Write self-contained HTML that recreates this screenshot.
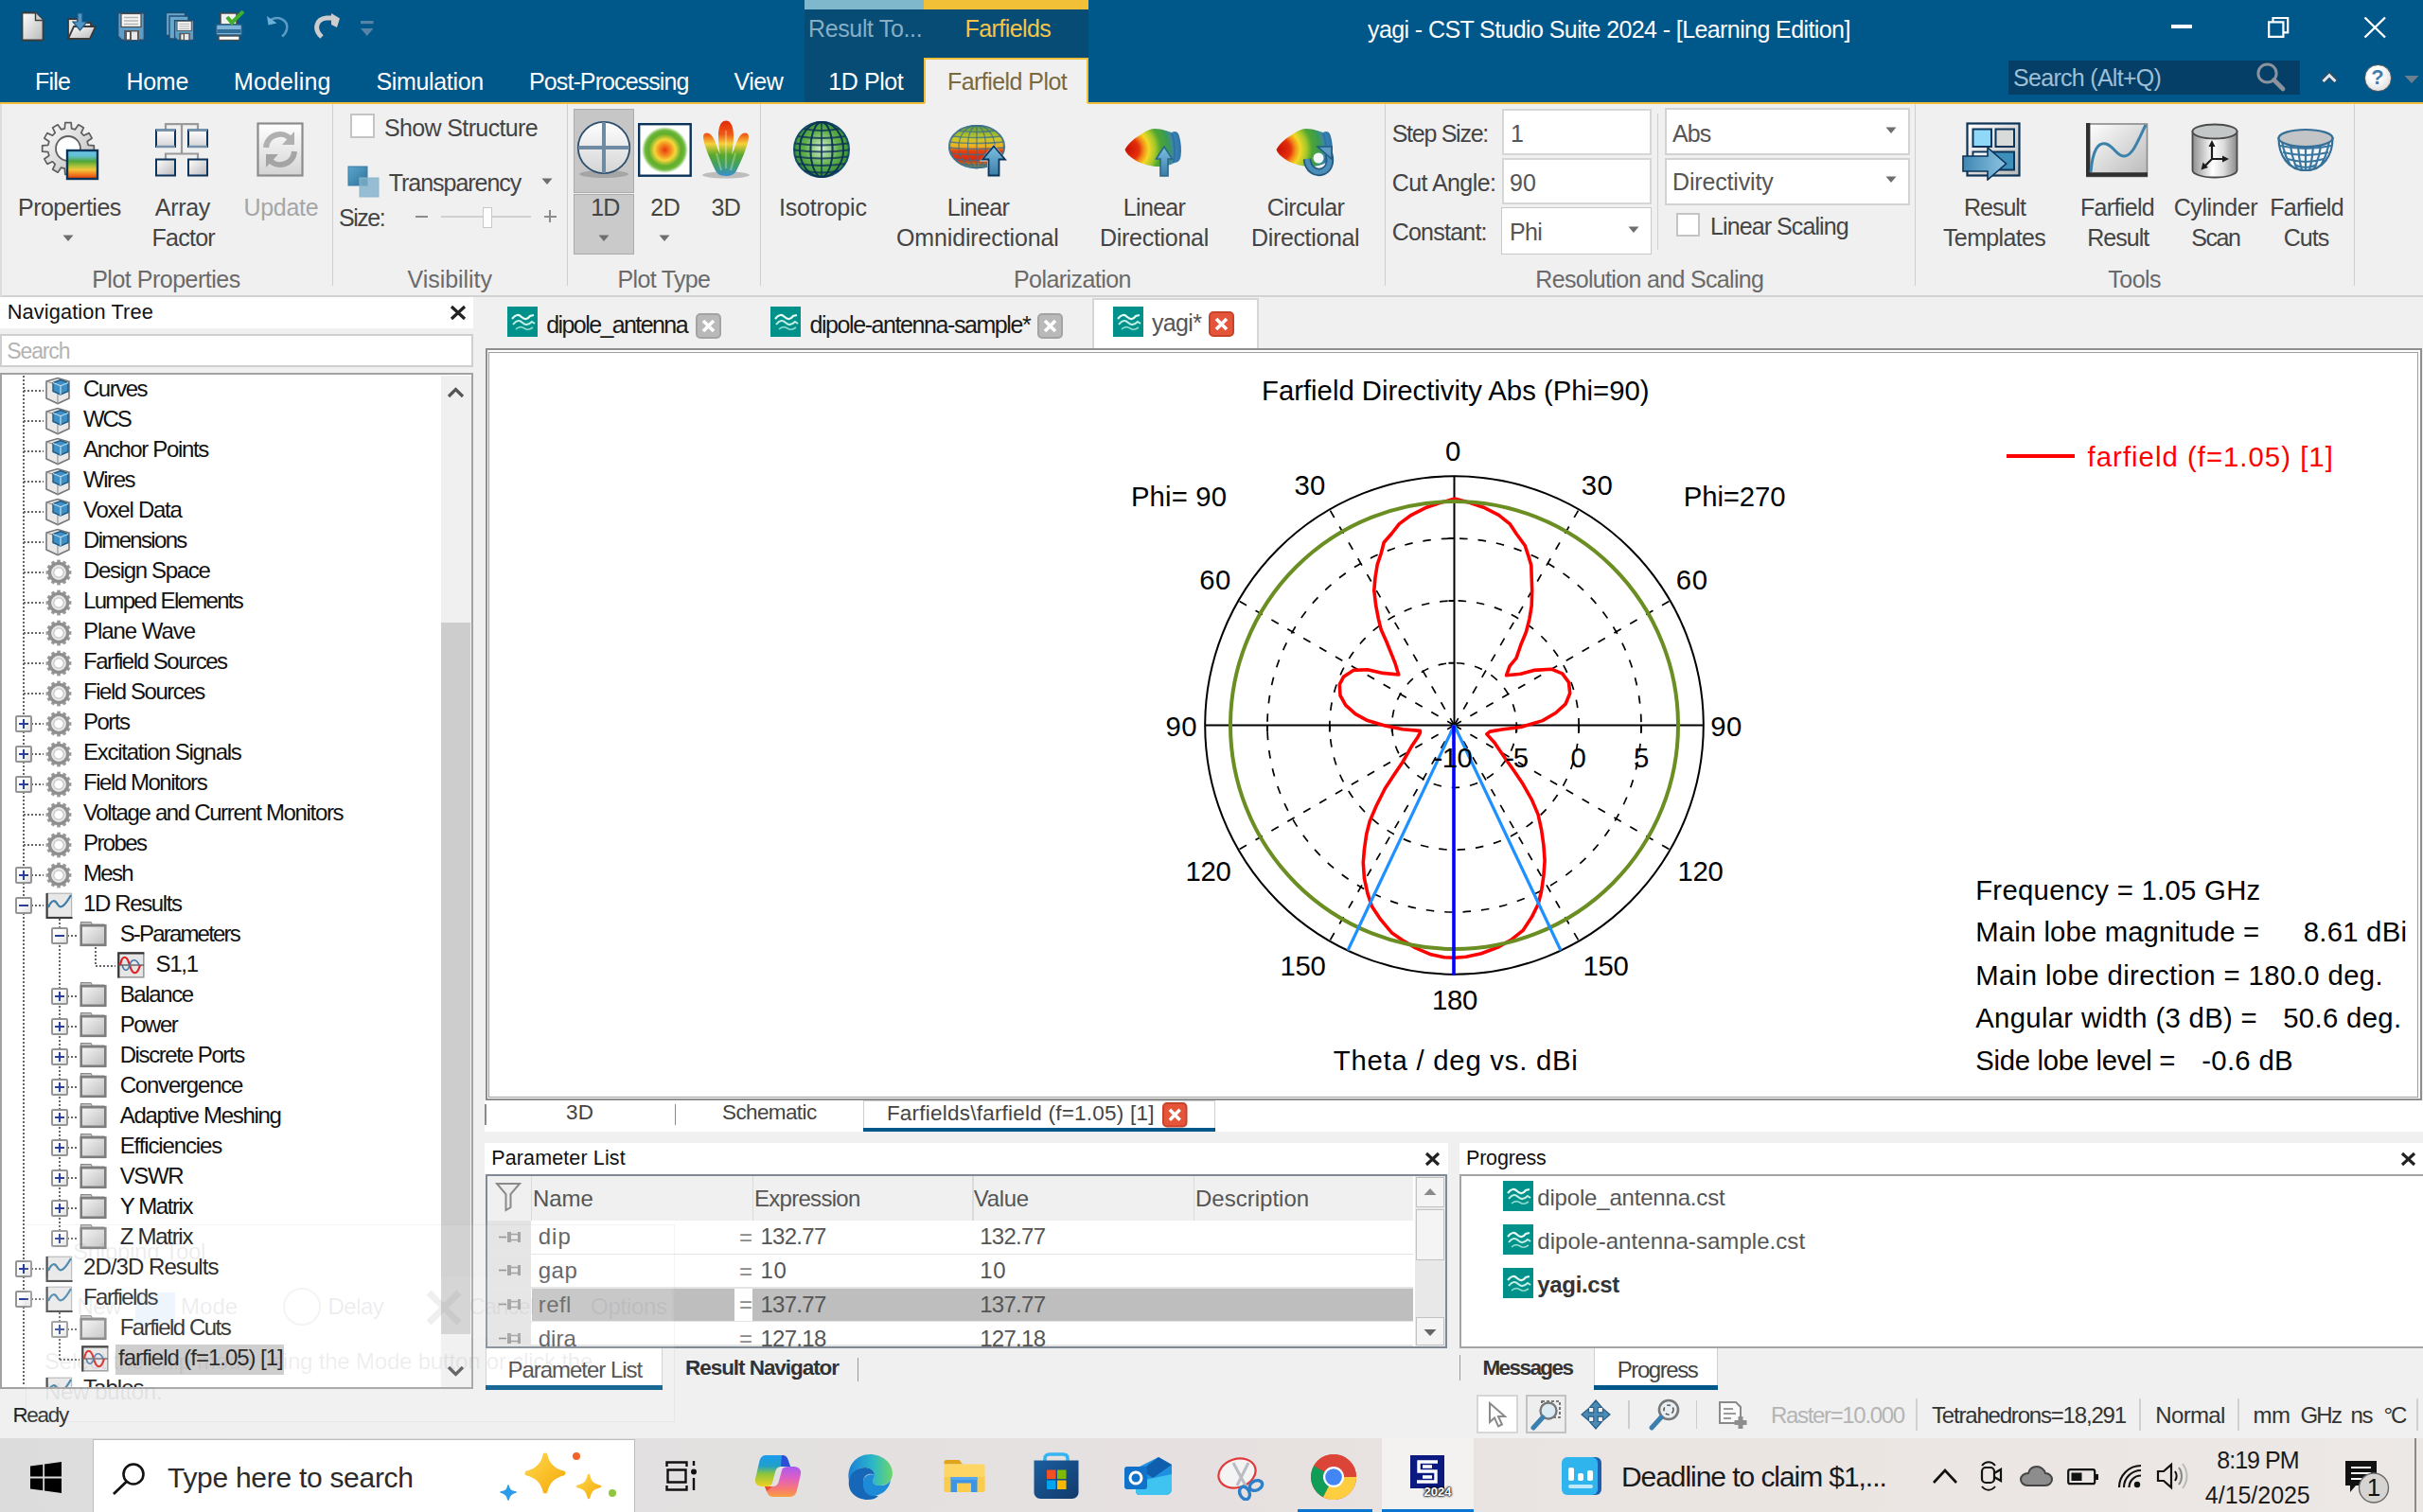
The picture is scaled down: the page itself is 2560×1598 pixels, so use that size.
<!DOCTYPE html><html><head><meta charset="utf-8"><title>CST</title><style>
html,body{margin:0;padding:0;background:#f0f0f0;overflow:hidden;}
html{width:2560px;height:1598px;}
body{width:2560px;height:1598px;overflow:hidden;position:relative;font-family:"Liberation Sans",sans-serif;}
.a{position:absolute;display:block;}
.t{position:absolute;white-space:nowrap;line-height:1;}
</style></head><body>
<svg width="0" height="0" style="position:absolute"><defs><linearGradient id="fg" x1="0" y1="0" x2="1" y2="1"><stop offset="0" stop-color="#f6f6f6"/><stop offset="1" stop-color="#bdbdbd"/></linearGradient></defs></svg>
<div class="a " style="left:0.0px;top:0.0px;width:2560.0px;height:108.0px;background:#00578a;"></div>
<div class="a " style="left:850.0px;top:0.0px;width:300.0px;height:108.0px;background:#064c75;"></div>
<div class="a " style="left:850.0px;top:0.0px;width:126.0px;height:9.5px;background:#7fb8cc;"></div>
<div class="a " style="left:976.0px;top:0.0px;width:174.0px;height:9.5px;background:#f2c037;"></div>
<span class="t" id="t0" style="top:18.2px;font-size:25px;color:#86aec4;letter-spacing:-0.363px;left:854.0px;">Result To...</span>
<span class="t" id="t1" style="top:18.2px;font-size:25px;color:#f3c64a;letter-spacing:-0.569px;left:1019.5px;">Farfields</span>
<span class="t" id="t2" style="top:18.8px;font-size:25px;color:#ffffff;letter-spacing:-0.592px;left:1445.0px;">yagi - CST Studio Suite 2024 - [Learning Edition]</span>
<div class="a " style="left:2293.5px;top:25.8px;width:22.8px;height:4.0px;background:#fff;"></div>
<svg class="a" style="left:2394.0px;top:16.0px" width="26" height="26" viewBox="0 0 26 26"><path d="M3.200 7.400h15.200v15.400H3.200z M7.500 7v-4h15.700v15.400h-4.500" fill="none" stroke="#fff" stroke-width="2.200"/></svg>
<svg class="a" style="left:2496.0px;top:16.0px" width="26" height="26" viewBox="0 0 26 26"><path d="M2.500 2.500L24 23.500M24 2.500L2.500 23.500" stroke="#fff" stroke-width="2.400" fill="none"/></svg>
<span class="t" id="t3" style="top:73.5px;font-size:25px;color:#ffffff;letter-spacing:-0.762px;left:37.0px;">File</span>
<span class="t" id="t4" style="top:73.5px;font-size:25px;color:#ffffff;letter-spacing:-0.259px;left:133.4px;">Home</span>
<span class="t" id="t5" style="top:73.5px;font-size:25px;color:#ffffff;letter-spacing:0.137px;left:247.0px;">Modeling</span>
<span class="t" id="t6" style="top:73.5px;font-size:25px;color:#ffffff;letter-spacing:-0.348px;left:397.5px;">Simulation</span>
<span class="t" id="t7" style="top:73.5px;font-size:25px;color:#ffffff;letter-spacing:-0.899px;left:559.0px;">Post-Processing</span>
<span class="t" id="t8" style="top:73.5px;font-size:25px;color:#ffffff;letter-spacing:-0.500px;left:775.5px;">View</span>
<span class="t" id="t9" style="top:73.5px;font-size:25px;color:#ffffff;letter-spacing:-0.433px;left:875.3px;">1D Plot</span>
<div class="a " style="left:976.0px;top:61.0px;width:174.0px;height:48.0px;background:#f0f0f0;border:2px solid #f2c037;border-bottom:none;box-sizing:border-box;"></div>
<span class="t" id="t10" style="top:73.5px;font-size:25px;color:#7a6840;letter-spacing:-0.549px;left:1001.0px;">Farfield Plot</span>
<div class="a " style="left:0.0px;top:107.5px;width:977.0px;height:2.0px;background:#f2c037;"></div>
<div class="a " style="left:1149.0px;top:107.5px;width:1411.0px;height:2.0px;background:#f2c037;"></div>
<div class="a " style="left:2122.0px;top:64.2px;width:308.0px;height:35.5px;background:#053f67;"></div>
<span class="t" id="t11" style="top:70.2px;font-size:25px;color:#9dbfd6;letter-spacing:-0.699px;left:2127.0px;">Search (Alt+Q)</span>
<svg class="a" style="left:2383.0px;top:65.0px" width="34" height="34" viewBox="0 0 34 34"><circle cx="12.5" cy="12.5" r="9.6" fill="none" stroke="#8d939c" stroke-width="3"/><path d="M19.5 19.5L29 29" stroke="#8d939c" stroke-width="4.6" stroke-linecap="round"/></svg>
<svg class="a" style="left:2450.5px;top:73.5px" width="20" height="15" viewBox="0 0 20 15"><path d="M3 12L10 5L17 12" stroke="#3a4a5a" stroke-width="5.4" fill="none"/><path d="M3.5 12L10 5.500L16.500 12" stroke="#dde8f0" stroke-width="3" fill="none"/></svg>
<div class="a" style="left:2497.5px;top:67.5px;width:29px;height:29px;border-radius:50%;background:radial-gradient(circle at 40% 35%,#fff 30%,#cfcfcf 100%);border:1.5px solid #5a5a5a;box-sizing:border-box;"></div>
<span class="t" id="t12" style="top:70.8px;font-size:22px;color:#3f7fae;font-weight:bold;left:2512.0px;transform:translateX(-50%);">?</span>
<svg class="a" style="left:2540.0px;top:79.0px" width="16" height="10" viewBox="0 0 16 10"><path d="M0.5 1h15l-7.5 8z" fill="#6b7f8e"/></svg>
<div class="a " style="left:0.0px;top:109.5px;width:2560.0px;height:203.0px;background:#f0f0f0;"></div>
<div class="a " style="left:0.0px;top:311.5px;width:2560.0px;height:2.0px;background:#d2d2d2;"></div>
<div class="a " style="left:0.0px;top:109.5px;width:2.0px;height:203.0px;background:#dcdcdc;"></div>
<div class="a " style="left:350.5px;top:109.5px;width:1.6px;height:192.0px;background:#cfcfcf;"></div>
<div class="a " style="left:598.5px;top:109.5px;width:1.6px;height:192.0px;background:#cfcfcf;"></div>
<div class="a " style="left:802.5px;top:109.5px;width:1.6px;height:192.0px;background:#cfcfcf;"></div>
<div class="a " style="left:1462.5px;top:109.5px;width:1.6px;height:192.0px;background:#cfcfcf;"></div>
<div class="a " style="left:2022.5px;top:109.5px;width:1.6px;height:192.0px;background:#cfcfcf;"></div>
<div class="a " style="left:2486.5px;top:109.5px;width:1.6px;height:192.0px;background:#cfcfcf;"></div>
<span class="t" id="t13" style="top:282.8px;font-size:25px;color:#6a6a6a;letter-spacing:-0.495px;left:97.2px;">Plot Properties</span>
<span class="t" id="t14" style="top:282.8px;font-size:25px;color:#6a6a6a;letter-spacing:-0.039px;left:430.5px;">Visibility</span>
<span class="t" id="t15" style="top:282.8px;font-size:25px;color:#6a6a6a;letter-spacing:-0.681px;left:652.6px;">Plot Type</span>
<span class="t" id="t16" style="top:282.8px;font-size:25px;color:#6a6a6a;letter-spacing:-0.558px;left:1071.0px;">Polarization</span>
<span class="t" id="t17" style="top:282.8px;font-size:25px;color:#6a6a6a;letter-spacing:-0.672px;left:1622.3px;">Resolution and Scaling</span>
<span class="t" id="t18" style="top:282.8px;font-size:25px;color:#6a6a6a;letter-spacing:-0.525px;left:2227.3px;">Tools</span>
<div class="a " style="left:606.4px;top:114.5px;width:63.4px;height:89.0px;background:#c6c6c6;border:1.5px solid #ababab;box-sizing:border-box;"></div>
<div class="a " style="left:606.4px;top:205.0px;width:63.4px;height:64.0px;background:#cacaca;border:1.5px solid #ababab;box-sizing:border-box;"></div>
<span class="t" id="t19" style="top:207.2px;font-size:25px;color:#444444;letter-spacing:-0.520px;left:19.0px;">Properties</span>
<span class="t" id="t20" style="top:207.2px;font-size:25px;color:#444444;letter-spacing:-0.297px;left:163.8px;">Array</span>
<span class="t" id="t21" style="top:238.8px;font-size:25px;color:#444444;letter-spacing:-0.768px;left:160.6px;">Factor</span>
<span class="t" id="t22" style="top:207.2px;font-size:25px;color:#444444;letter-spacing:-1.009px;left:624.3px;">1D</span>
<span class="t" id="t23" style="top:207.2px;font-size:25px;color:#444444;letter-spacing:-0.359px;left:687.2px;">2D</span>
<span class="t" id="t24" style="top:207.2px;font-size:25px;color:#444444;letter-spacing:-0.659px;left:751.6px;">3D</span>
<span class="t" id="t25" style="top:207.2px;font-size:25px;color:#444444;letter-spacing:-0.193px;left:823.0px;">Isotropic</span>
<span class="t" id="t26" style="top:207.2px;font-size:25px;color:#444444;letter-spacing:-0.658px;left:1000.7px;">Linear</span>
<span class="t" id="t27" style="top:238.8px;font-size:25px;color:#444444;letter-spacing:-0.136px;left:947.0px;">Omnidirectional</span>
<span class="t" id="t28" style="top:207.2px;font-size:25px;color:#444444;letter-spacing:-0.675px;left:1186.8px;">Linear</span>
<span class="t" id="t29" style="top:238.8px;font-size:25px;color:#444444;letter-spacing:-0.287px;left:1162.0px;">Directional</span>
<span class="t" id="t30" style="top:207.2px;font-size:25px;color:#444444;letter-spacing:-0.572px;left:1338.7px;">Circular</span>
<span class="t" id="t31" style="top:238.8px;font-size:25px;color:#444444;letter-spacing:-0.351px;left:1322.0px;">Directional</span>
<span class="t" id="t32" style="top:207.2px;font-size:25px;color:#444444;letter-spacing:-1.004px;left:2075.0px;">Result</span>
<span class="t" id="t33" style="top:238.8px;font-size:25px;color:#444444;letter-spacing:-0.634px;left:2053.0px;">Templates</span>
<span class="t" id="t34" style="top:207.2px;font-size:25px;color:#444444;letter-spacing:-0.641px;left:2197.9px;">Farfield</span>
<span class="t" id="t35" style="top:238.8px;font-size:25px;color:#444444;letter-spacing:-0.987px;left:2205.3px;">Result</span>
<span class="t" id="t36" style="top:207.2px;font-size:25px;color:#444444;letter-spacing:-0.394px;left:2296.7px;">Cylinder</span>
<span class="t" id="t37" style="top:238.8px;font-size:25px;color:#444444;letter-spacing:-1.434px;left:2315.3px;">Scan</span>
<span class="t" id="t38" style="top:207.2px;font-size:25px;color:#444444;letter-spacing:-0.703px;left:2398.2px;">Farfield</span>
<span class="t" id="t39" style="top:238.8px;font-size:25px;color:#444444;letter-spacing:-0.989px;left:2412.8px;">Cuts</span>
<span class="t" id="t40" style="top:207.2px;font-size:25px;color:#a6a6a6;letter-spacing:-0.312px;left:257.5px;">Update</span>
<div class="a " style="left:369.8px;top:120.0px;width:26.4px;height:26.0px;background:#fff;border:2px solid #c4c4c4;box-sizing:border-box;"></div>
<span class="t" id="t41" style="top:123.2px;font-size:25px;color:#444444;letter-spacing:-0.634px;left:406.0px;">Show Structure</span>
<span class="t" id="t42" style="top:181.2px;font-size:25px;color:#444444;letter-spacing:-1.031px;left:410.7px;">Transparency</span>
<span class="t" id="t43" style="top:218.2px;font-size:25px;color:#444444;letter-spacing:-1.469px;left:358.0px;">Size:</span>
<div class="a " style="left:438.5px;top:228.0px;width:13.5px;height:1.6px;background:#8c8c8c;"></div>
<div class="a " style="left:466.0px;top:228.0px;width:95.0px;height:1.6px;background:#d0d0d0;"></div>
<div class="a " style="left:509.8px;top:218.7px;width:10.0px;height:22.3px;background:#fff;border:1.5px solid #c8c8c8;box-sizing:border-box;"></div>
<div class="a " style="left:574.5px;top:228.0px;width:13.2px;height:1.6px;background:#8c8c8c;"></div>
<div class="a " style="left:580.3px;top:222.0px;width:1.6px;height:13.2px;background:#8c8c8c;"></div>
<span class="t" id="t44" style="top:129.2px;font-size:25px;color:#444444;letter-spacing:-1.270px;left:1470.7px;">Step Size:</span>
<span class="t" id="t45" style="top:180.8px;font-size:25px;color:#444444;letter-spacing:-0.561px;left:1470.7px;">Cut Angle:</span>
<span class="t" id="t46" style="top:232.8px;font-size:25px;color:#444444;letter-spacing:-0.774px;left:1470.7px;">Constant:</span>
<div class="a " style="left:1587.0px;top:114.5px;width:158.4px;height:49.0px;background:#fff;border:2.5px solid #d6d6d6;box-sizing:border-box;"></div>
<div class="a " style="left:1587.0px;top:167.4px;width:158.4px;height:49.0px;background:#fff;border:2.5px solid #d6d6d6;box-sizing:border-box;"></div>
<div class="a " style="left:1586.4px;top:219.0px;width:159.0px;height:50.0px;background:#fff;border:1.6px solid #c9c9c9;box-sizing:border-box;"></div>
<span class="t" id="t47" style="top:129.2px;font-size:25px;color:#555;left:1596.0px;">1</span>
<span class="t" id="t48" style="top:180.8px;font-size:25px;color:#555;letter-spacing:0.219px;left:1595.0px;">90</span>
<span class="t" id="t49" style="top:232.8px;font-size:25px;color:#555;letter-spacing:-0.630px;left:1595.0px;">Phi</span>
<div class="a " style="left:1750.5px;top:120.0px;width:1.6px;height:144.0px;background:#d0d0d0;"></div>
<div class="a " style="left:1758.6px;top:114.2px;width:259.0px;height:50.1px;background:#fff;border:2px solid #d2d2d2;box-sizing:border-box;"></div>
<div class="a " style="left:1758.6px;top:167.0px;width:259.0px;height:50.4px;background:#fff;border:2px solid #d2d2d2;box-sizing:border-box;"></div>
<span class="t" id="t50" style="top:129.2px;font-size:25px;color:#555;letter-spacing:-0.948px;left:1767.0px;">Abs</span>
<span class="t" id="t51" style="top:180.2px;font-size:25px;color:#555;letter-spacing:-0.163px;left:1767.0px;">Directivity</span>
<div class="a " style="left:1770.5px;top:224.5px;width:25.5px;height:25.5px;background:#fff;border:2px solid #c4c4c4;box-sizing:border-box;"></div>
<span class="t" id="t52" style="top:226.8px;font-size:25px;color:#444444;letter-spacing:-0.906px;left:1807.0px;">Linear Scaling</span>
<svg class="a" style="left:65.8px;top:247.5px" width="12" height="8" viewBox="0 0 12 8"><path d="M0.5 0.5h11l-5.5 6.5z" fill="#6e6e6e"/></svg>
<svg class="a" style="left:631.5px;top:247.5px" width="12" height="8" viewBox="0 0 12 8"><path d="M0.5 0.5h11l-5.5 6.5z" fill="#6e6e6e"/></svg>
<svg class="a" style="left:695.7px;top:247.5px" width="12" height="8" viewBox="0 0 12 8"><path d="M0.5 0.5h11l-5.5 6.5z" fill="#6e6e6e"/></svg>
<svg class="a" style="left:571.7px;top:188.0px" width="12" height="8" viewBox="0 0 12 8"><path d="M0.5 0.5h11l-5.5 6.5z" fill="#6e6e6e"/></svg>
<svg class="a" style="left:1719.6px;top:238.5px" width="12" height="8" viewBox="0 0 12 8"><path d="M0.5 0.5h11l-5.5 6.5z" fill="#6e6e6e"/></svg>
<svg class="a" style="left:1991.9px;top:133.7px" width="12" height="8" viewBox="0 0 12 8"><path d="M0.5 0.5h11l-5.5 6.5z" fill="#6e6e6e"/></svg>
<svg class="a" style="left:1991.9px;top:186.2px" width="12" height="8" viewBox="0 0 12 8"><path d="M0.5 0.5h11l-5.5 6.5z" fill="#6e6e6e"/></svg>
<svg width="0" height="0" style="position:absolute"><defs>
<linearGradient id="gwg" x1="0" y1="0" x2="1" y2="1"><stop offset="0" stop-color="#ffffff"/><stop offset="1" stop-color="#b9b9b9"/></linearGradient>
<linearGradient id="gwv" x1="0" y1="0" x2="0" y2="1"><stop offset="0" stop-color="#ffffff"/><stop offset="1" stop-color="#d4d4d4"/></linearGradient>
<linearGradient id="rain" x1="0" y1="0" x2="0" y2="1"><stop offset="0" stop-color="#6cc3ea"/><stop offset=".2" stop-color="#63bfd0"/><stop offset=".38" stop-color="#4fa636"/><stop offset=".55" stop-color="#a9c23a"/><stop offset=".68" stop-color="#f4c63a"/><stop offset=".85" stop-color="#f07a1e"/><stop offset="1" stop-color="#e8350c"/></linearGradient>
<linearGradient id="rain3" x1="0" y1="0" x2="0" y2="1"><stop offset="0" stop-color="#e22a0a"/><stop offset=".25" stop-color="#ee5a14"/><stop offset=".42" stop-color="#f6d23a"/><stop offset=".62" stop-color="#57a82c"/><stop offset=".82" stop-color="#3f9f6a"/><stop offset="1" stop-color="#3a8fd0"/></linearGradient>
<radialGradient id="rad2"><stop offset="0" stop-color="#ea3a10"/><stop offset=".25" stop-color="#f28a1e"/><stop offset=".45" stop-color="#f7d63a"/><stop offset=".7" stop-color="#5fae2c"/><stop offset=".85" stop-color="#6db73a"/><stop offset="1" stop-color="#ffffff"/></radialGradient>
<radialGradient id="iso" cx=".5" cy=".48" r=".55"><stop offset="0" stop-color="#d6efd0"/><stop offset=".55" stop-color="#63b14f"/><stop offset="1" stop-color="#2f8a2a"/></radialGradient>
<radialGradient id="blob" gradientUnits="userSpaceOnUse" cx="4" cy="23" r="57"><stop offset="0" stop-color="#c81406"/><stop offset=".2" stop-color="#e4300a"/><stop offset=".29" stop-color="#f2901a"/><stop offset=".38" stop-color="#f3d824"/><stop offset=".5" stop-color="#a6c82c"/><stop offset=".6" stop-color="#4fa632"/><stop offset=".74" stop-color="#3b9a52"/><stop offset=".86" stop-color="#3a86b8"/><stop offset="1" stop-color="#2f6fa2"/></radialGradient>
<linearGradient id="arr" x1="0" y1="0" x2="0" y2="1"><stop offset="0" stop-color="#7cc0e2"/><stop offset="1" stop-color="#3a7ea8"/></linearGradient>
<linearGradient id="arrh" x1="0" y1="0" x2="1" y2="0"><stop offset="0" stop-color="#3f86b2"/><stop offset="1" stop-color="#8cc4e2"/></linearGradient>
<linearGradient id="cyl" x1="0" y1="0" x2="1" y2="0"><stop offset="0" stop-color="#8f8f8f"/><stop offset=".45" stop-color="#ffffff"/><stop offset=".7" stop-color="#dcdcdc"/><stop offset="1" stop-color="#8a8a8a"/></linearGradient>
<linearGradient id="omni" x1="0" y1="0" x2="0" y2="1"><stop offset="0" stop-color="#5a9a3a"/><stop offset=".3" stop-color="#c7c92a"/><stop offset=".5" stop-color="#f0b020"/><stop offset=".6" stop-color="#e8400c"/><stop offset=".8" stop-color="#dc2a10"/><stop offset="1" stop-color="#8aa83a"/></linearGradient>
<linearGradient id="tb1" x1="0" y1="0" x2="1" y2="1"><stop offset="0" stop-color="#5aa7cc"/><stop offset="1" stop-color="#2f7199"/></linearGradient>
</defs></svg>
<svg class="a" style="left:22.0px;top:12.0px" width="25" height="32" viewBox="0 0 25 32"><path d="M1.5 1.5h14l8 8v21h-22z" fill="url(#gwg)" stroke="#3c3c3c" stroke-width="1.8"/><path d="M15.5 1.500v8h8" fill="#cfcfcf" stroke="#3c3c3c" stroke-width="1.4"/></svg>
<svg class="a" style="left:69.0px;top:11.0px" width="34" height="32" viewBox="0 0 34 32"><path d="M3 30V9h9l3 4h12v6" fill="#e6e6e6" stroke="#3a3a3a" stroke-width="1.8"/><path d="M3 30l6-13h23l-6 13z" fill="url(#gwg)" stroke="#3a3a3a" stroke-width="1.8"/><path d="M13 3h5v9h5l-7.500 9-7.500-9h5z" fill="#4f94c2" stroke="#215a85" stroke-width="1.2"/></svg>
<svg class="a" style="left:122.5px;top:12.0px" width="31" height="32" viewBox="0 0 31 32"><path d="M1.5 1.5h28v29h-24l-4-4z" fill="#5e9ec6" stroke="#1f4e74" stroke-width="1.8"/><rect x="5" y="2.500" width="21" height="14" fill="#f4f4f4" stroke="#4a4a4a" stroke-width="1.2"/><path d="M8 6.500h15M8 10h15M8 13.500h15" stroke="#b5b5b5" stroke-width="1.4"/><rect x="8" y="20" width="16" height="10.500" fill="#5a5a5a"/><rect x="11" y="22" width="3" height="7.500" fill="#fff"/><rect x="16" y="21.500" width="6" height="8.500" fill="#e8e8e8"/></svg>
<svg class="a" style="left:174.0px;top:12.0px" width="32" height="32" viewBox="0 0 32 32"><path d="M1.5 1.5h20v24h-20z" fill="#6aa7cc" stroke="#1f4e74" stroke-width="1.4"/><path d="M5 5h20v24h-20z" fill="#6aa7cc" stroke="#1f4e74" stroke-width="1.4"/><g transform="translate(9.500 8.500) scale(0.72)"><path d="M1.5 1.5h28v29h-24l-4-4z" fill="#5e9ec6" stroke="#1f4e74" stroke-width="1.8"/><rect x="5" y="2.500" width="21" height="14" fill="#f4f4f4" stroke="#4a4a4a" stroke-width="1.2"/><path d="M8 6.500h15M8 10h15M8 13.500h15" stroke="#b5b5b5" stroke-width="1.4"/><rect x="8" y="20" width="16" height="10.500" fill="#5a5a5a"/><rect x="11" y="22" width="3" height="7.500" fill="#fff"/><rect x="16" y="21.500" width="6" height="8.500" fill="#e8e8e8"/></g></svg>
<svg class="a" style="left:226.5px;top:11.0px" width="32" height="33" viewBox="0 0 32 33"><path d="M6 3h17v12H6z" fill="#f0f0f0" stroke="#4a4a4a" stroke-width="1.6"/><rect x="1.500" y="15" width="27" height="11" rx="1.500" fill="#7fb5d8" stroke="#2a5f88" stroke-width="1.600"/><rect x="2.500" y="20" width="25" height="4" fill="#2f6d98"/><rect x="4" y="27" width="22" height="4.500" fill="#fff" stroke="#4a4a4a" stroke-width="1.400"/><path d="M13 7l5 6L30 1" fill="none" stroke="#3fae2a" stroke-width="4"/></svg>
<svg class="a" style="left:281.0px;top:15.0px" width="27" height="26" viewBox="0 0 27 26"><path d="M3 7.500C12 0 24 6 22 16c-1 4-3 6-5 7.500" fill="none" stroke="#5b9cc4" stroke-width="2.600"/><path d="M1 2l1.500 9.500 9-2z" fill="#6fb0d6"/></svg>
<svg class="a" style="left:331.0px;top:14.0px" width="29" height="27" viewBox="0 0 29 27"><path d="M9 25C0 17 3 6 14 5h8" fill="none" stroke="#cdcdcd" stroke-width="5"/><path d="M19 0l9 5.500-3 9.500-6-3z" fill="#cdcdcd"/></svg>
<svg class="a" style="left:379.5px;top:21.0px" width="16" height="18" viewBox="0 0 16 18"><rect x="1" y="1" width="13.500" height="3.200" fill="#5683a6"/><path d="M1 9h13.500l-6.750 8z" fill="#5683a6"/></svg>
<svg class="a" style="left:43.0px;top:128.0px" width="64" height="64" viewBox="0 0 64 64"><g transform="translate(29 29)"><path d="M-3.64,-21.19 L-3.16,-27.32 L3.16,-27.32 L3.64,-21.19 L7.44,-20.17 L10.93,-25.24 L16.39,-22.08 L13.75,-16.53 L16.53,-13.75 L22.08,-16.39 L25.24,-10.93 L20.17,-7.44 L21.19,-3.64 L27.32,-3.16 L27.32,3.16 L21.19,3.64 L20.17,7.44 L25.24,10.93 L22.08,16.39 L16.53,13.75 L13.75,16.53 L16.39,22.08 L10.93,25.24 L7.44,20.17 L3.64,21.19 L3.16,27.32 L-3.16,27.32 L-3.64,21.19 L-7.44,20.17 L-10.93,25.24 L-16.39,22.08 L-13.75,16.53 L-16.53,13.75 L-22.08,16.39 L-25.24,10.93 L-20.17,7.44 L-21.19,3.64 L-27.32,3.16 L-27.32,-3.16 L-21.19,-3.64 L-20.17,-7.44 L-25.24,-10.93 L-22.08,-16.39 L-16.53,-13.75 L-13.75,-16.53 L-16.39,-22.08 L-10.93,-25.24 L-7.44,-20.17Z" fill="url(#gwg)" stroke="#5f5f5f" stroke-width="1.700" stroke-linejoin="round"/><circle r="13" fill="#fff" stroke="#5f5f5f" stroke-width="1.800"/></g><rect x="28" y="31" width="32" height="30" fill="url(#rain)" stroke="#0c3358" stroke-width="2.400"/></svg>
<svg class="a" style="left:162.0px;top:128.0px" width="60" height="60" viewBox="0 0 60 60"><path d="M13 10V3.200h34V10M30 3.200v31M13 40v-5.500h34V40" fill="none" stroke="#9a9a9a" stroke-width="2.200"/><rect x="3" y="9.500" width="20" height="17.500" fill="url(#gwv)" stroke="#0c3358" stroke-width="2"/><rect x="37" y="9.500" width="20" height="17.500" fill="url(#gwv)" stroke="#0c3358" stroke-width="2"/><path d="M3 9.500h20M37 9.500h20M3 27h20M37 27h20" stroke="#7693ab" stroke-width="2.400"/><rect x="3" y="40.500" width="20" height="17" fill="url(#gwg)" stroke="#0c3358" stroke-width="2"/><rect x="37" y="40.500" width="20" height="17" fill="url(#gwg)" stroke="#0c3358" stroke-width="2"/></svg>
<svg class="a" style="left:271.0px;top:129.0px" width="50" height="58" viewBox="0 0 50 58"><rect x="1.500" y="1.500" width="47" height="55" fill="url(#gwv)" stroke="#8c8c8c" stroke-width="2.200"/><path d="M10 27a15 15 0 0 1 27-8" fill="none" stroke="#b0b0b0" stroke-width="6"/><path d="M40 10v14H27z" fill="#b0b0b0"/><path d="M40 31a15 15 0 0 1-27 8" fill="none" stroke="#a4a4a4" stroke-width="6"/><path d="M10 48V34h13z" fill="#a4a4a4"/></svg>
<svg class="a" style="left:367.0px;top:175.0px" width="34" height="34" viewBox="0 0 34 34"><rect x="1" y="1" width="20" height="20" fill="url(#tb1)" stroke="#3a7da4" stroke-width="1"/><rect x="13" y="13" width="20" height="20" fill="#7fb0c9" fill-opacity=".8" stroke="#8bb6cc" stroke-width="1"/></svg>
<svg class="a" style="left:608.0px;top:126.0px" width="60" height="64" viewBox="0 0 60 64"><ellipse cx="30" cy="58" rx="26" ry="4" fill="#8a8a8a" opacity=".55"/><circle cx="30" cy="30" r="27.200" fill="url(#gwv)" stroke="#2d4f6e" stroke-width="1.800"/><path d="M3 30h54M30 3v54" stroke="#6f8ba3" stroke-width="4"/></svg>
<svg class="a" style="left:674.0px;top:129.5px" width="57" height="57" viewBox="0 0 57 57"><rect x="1.200" y="1.200" width="54.500" height="54.500" fill="#fff" stroke="#0c3358" stroke-width="2.400"/><circle cx="28.500" cy="28.500" r="24.500" fill="url(#rad2)"/></svg>
<svg class="a" style="left:740.0px;top:126.0px" width="54" height="64" viewBox="0 0 54 64"><ellipse cx="27" cy="59" rx="25" ry="3.500" fill="#8a8a8a" opacity=".5"/><path d="M27 1.500c5 0 8 6 8 16 0 9-1 16-2 20 3-6 6-17 9-20 3-4 9-4 9 1 0 7-7 24-13 36-2 4-6 5.500-11 5.500s-9-1.500-11-5.500C10 42.500 3 25.500 3 18.500c0-5 6-5 9-1 3 3 6 14 9 20-1-4-2-11-2-20 0-10 3-16 8-16z" fill="url(#rain3)"/><path d="M27 12v40M17 36l5 18M37 36l-5 18" stroke="#fff" stroke-opacity=".28" stroke-width="2.200" fill="none"/></svg>
<svg class="a" style="left:838.0px;top:127.5px" width="60" height="60" viewBox="0 0 60 60"><circle cx="30" cy="30" r="29" fill="url(#iso)" stroke="#14506a" stroke-width="2"/><ellipse cx="30" cy="30" rx="23.1" ry="29" fill="none" stroke="#0c3358" stroke-width="1.800" opacity=".8"/><ellipse cx="30" cy="30" rx="11.6" ry="29" fill="none" stroke="#0c3358" stroke-width="1.800" opacity=".8"/><ellipse cx="30" cy="30" rx="0.1" ry="29" fill="none" stroke="#0c3358" stroke-width="1.800" opacity=".8"/><ellipse cx="30" cy="30" rx="11.6" ry="29" fill="none" stroke="#0c3358" stroke-width="1.800" opacity=".8"/><ellipse cx="30" cy="30" rx="23.1" ry="29" fill="none" stroke="#0c3358" stroke-width="1.800" opacity=".8"/><path d="M11.1 8Q30 12 48.9 8" fill="none" stroke="#0c3358" stroke-width="1.800" opacity=".8"/><path d="M4.6 16Q30 20 55.4 16" fill="none" stroke="#0c3358" stroke-width="1.800" opacity=".8"/><path d="M1.7 23.5Q30 27.5 58.3 23.5" fill="none" stroke="#0c3358" stroke-width="1.800" opacity=".8"/><path d="M1.0 30.5Q30 34.5 59.0 30.5" fill="none" stroke="#0c3358" stroke-width="1.800" opacity=".8"/><path d="M2.0 37.5Q30 41.5 58.0 37.5" fill="none" stroke="#0c3358" stroke-width="1.800" opacity=".8"/><path d="M5.2 45Q30 49 54.8 45" fill="none" stroke="#0c3358" stroke-width="1.800" opacity=".8"/><path d="M11.7 52.5Q30 56.5 48.3 52.5" fill="none" stroke="#0c3358" stroke-width="1.800" opacity=".8"/></svg>
<svg class="a" style="left:1002.0px;top:131.5px" width="62" height="56" viewBox="0 0 62 56"><ellipse cx="30" cy="23" rx="29.500" ry="22.500" fill="url(#omni)" stroke="#5a8596" stroke-width="1.400"/><path d="M30 .5v45" stroke="#3a6d8c" stroke-width="1.300" opacity=".75"/><ellipse cx="30" cy="23" rx="9.5" ry="22.500" fill="none" stroke="#3a6d8c" stroke-width="1.300" opacity=".75"/><ellipse cx="30" cy="23" rx="19.0" ry="22.500" fill="none" stroke="#3a6d8c" stroke-width="1.300" opacity=".75"/><ellipse cx="30" cy="23" rx="28.5" ry="22.500" fill="none" stroke="#3a6d8c" stroke-width="1.300" opacity=".75"/><path d="M10.7 6Q30 9 49.3 6" fill="none" stroke="#3a6d8c" stroke-width="1.300" opacity=".75"/><path d="M4.3 12Q30 15 55.7 12" fill="none" stroke="#3a6d8c" stroke-width="1.300" opacity=".75"/><path d="M1.2 18Q30 21 58.8 18" fill="none" stroke="#3a6d8c" stroke-width="1.300" opacity=".75"/><path d="M0.5 24Q30 27 59.5 24" fill="none" stroke="#3a6d8c" stroke-width="1.300" opacity=".75"/><path d="M2.0 30Q30 33 58.0 30" fill="none" stroke="#3a6d8c" stroke-width="1.300" opacity=".75"/><path d="M5.9 36Q30 39 54.1 36" fill="none" stroke="#3a6d8c" stroke-width="1.300" opacity=".75"/><path d="M12.3 41Q30 44 47.7 41" fill="none" stroke="#3a6d8c" stroke-width="1.300" opacity=".75"/><g transform="translate(35 21.500) scale(1 1)"><path d="M13 -1L28 17h-8v16h-14V17h-8z" fill="#f0f0f0"/><path d="M13 1L25 15h-6.500v17h-11V15H1z" fill="url(#arr)" stroke="#0c3358" stroke-width="1.800"/></g></svg>
<svg class="a" style="left:1187.5px;top:134.5px" width="62" height="54" viewBox="0 0 62 54"><path d="M0.5 23C3 18 9 12 15.4 8.4 22 4 27 1 32 1c8 0 14 3 18 4 3-2 7-1 8 4 2 7 2.500 15 1.500 21-.5 4-2.500 7-6.500 7-5 3-13 4.500-19 4-9-1-17-3.500-22.300-6.600C6 31 1.500 27 .5 23z" fill="url(#blob)"/><path d="M50 6c3.500 8 3.500 22 2 31" fill="none" stroke="#2d6a9a" stroke-width="2.200" opacity=".7"/><g transform="translate(32.500 19)"><path d="M9.500 1L18 14h-4.500v18h-8V14H1z" fill="url(#arr)" stroke="#2d668c" stroke-width="1.600"/></g></svg>
<svg class="a" style="left:1347.5px;top:134.5px" width="62" height="54" viewBox="0 0 62 54"><path d="M0.5 23C3 18 9 12 15.4 8.4 22 4 27 1 32 1c8 0 14 3 18 4 3-2 7-1 8 4 2 7 2.500 15 1.500 21-.5 4-2.500 7-6.500 7-5 3-13 4.500-19 4-9-1-17-3.500-22.300-6.600C6 31 1.500 27 .5 23z" fill="url(#blob)"/><path d="M50 6c3.500 8 3.500 22 2 31" fill="none" stroke="#2d6a9a" stroke-width="2.200" opacity=".7"/><path d="M31 32c0 12 10 19 19 15 8-4 9-14 6-22l-3-3" fill="none" stroke="#0c3358" stroke-width="9.500" opacity=".0"/><path d="M33 33c1 11 9 16 17 13 7-3 8-11 6-18" fill="none" stroke="#235a82" stroke-width="8.500"/><path d="M33 33c1 11 9 16 17 13 7-3 8-11 6-18" fill="none" stroke="#4a8db8" stroke-width="5"/><path d="M44 20h15v13z" fill="#5a9cc4" stroke="#235a82" stroke-width="1.600"/><circle cx="45" cy="32" r="5.500" fill="#f4f8fb"/></svg>
<svg class="a" style="left:2073.0px;top:129.0px" width="63" height="62" viewBox="0 0 63 62"><rect x="5.500" y="1.500" width="55" height="55" fill="url(#gwg)" stroke="#0c3358" stroke-width="2.200"/><rect x="11.500" y="7.500" width="19.500" height="18.500" fill="#8fd8f8" stroke="#0c3358" stroke-width="2"/><rect x="35.500" y="7.500" width="19.500" height="18.500" fill="#d9dbda" stroke="#0c3358" stroke-width="2"/><rect x="11.500" y="31.500" width="43.500" height="19" fill="#3f8fbd" stroke="#0c3358" stroke-width="2"/><rect x="12.500" y="32.500" width="15" height="5" fill="#f4f4f4"/><path d="M1 36h26v-9l19.500 17L27 61v-9H1z" fill="url(#arrh)" stroke="#0c3358" stroke-width="1.600"/></svg>
<svg class="a" style="left:2203.5px;top:129.5px" width="66" height="58" viewBox="0 0 66 58"><rect x="1" y="1" width="63.500" height="55.500" fill="url(#gwg)" stroke="#8a8a8a" stroke-width="1.600"/><path d="M2.200 0v54.500H65" fill="none" stroke="#2f2f2f" stroke-width="4.400"/><path d="M5 52c2-24 8-32 16-30 8 2 12 14 20 13s13-14 22-33" fill="none" stroke="#3b81aa" stroke-width="3"/></svg>
<svg class="a" style="left:2315.0px;top:129.5px" width="50" height="59" viewBox="0 0 50 59"><path d="M1.500 9v41c0 4 10 7.500 23.500 7.500S48.500 54 48.500 50V9z" fill="url(#cyl)" stroke="#4a4a4a" stroke-width="1.800"/><ellipse cx="25" cy="9" rx="23.500" ry="7.500" fill="#c4c7c7" stroke="#4a4a4a" stroke-width="1.800"/><path d="M22 38V22M22 38l14 0M22 38l-9 9" stroke="#1a1a1a" stroke-width="2.200" fill="none"/><path d="M22 18l3.500 7h-7zM40 38l-7 3.500v-7zM10.500 49.500l2-8 5.500 5.500z" fill="#1a1a1a"/></svg>
<svg class="a" style="left:2406.0px;top:134.0px" width="62" height="50" viewBox="0 0 62 50"><defs><clipPath id="bowlc"><path d="M1.5 12c0 18 10 34 28.5 34S58.5 30 58.5 12z"/></clipPath></defs><path d="M1.5 12c0 18 10 34 28.5 34S58.5 30 58.5 12z" fill="#f4f6f8"/><g clip-path="url(#bowlc)"><path d="M4.5 12Q7.5 34 18.0 46" fill="none" stroke="#3a77a0" stroke-width="2.200"/><path d="M13.0 12Q15.0 34 22.0 46" fill="none" stroke="#3a77a0" stroke-width="2.200"/><path d="M21.5 12Q22.5 34 26.0 46" fill="none" stroke="#3a77a0" stroke-width="2.200"/><path d="M30.0 12Q30.0 34 30.0 46" fill="none" stroke="#3a77a0" stroke-width="2.200"/><path d="M38.5 12Q37.5 34 34.0 46" fill="none" stroke="#3a77a0" stroke-width="2.200"/><path d="M47.0 12Q45.0 34 38.0 46" fill="none" stroke="#3a77a0" stroke-width="2.200"/><path d="M55.5 12Q52.5 34 42.0 46" fill="none" stroke="#3a77a0" stroke-width="2.200"/><path d="M3 20Q30 26 57 20" fill="none" stroke="#3a77a0" stroke-width="2.200"/><path d="M6 27Q30 33 54 27" fill="none" stroke="#3a77a0" stroke-width="2.200"/><path d="M11 34Q30 40 49 34" fill="none" stroke="#3a77a0" stroke-width="2.200"/><path d="M18 40Q30 46 42 40" fill="none" stroke="#3a77a0" stroke-width="2.200"/></g><path d="M1.5 12c0 18 10 34 28.5 34S58.5 30 58.5 12z" fill="none" stroke="#356f98" stroke-width="2.2"/><ellipse cx="30" cy="12" rx="28.5" ry="9" fill="#c2c4c5" stroke="#356f98" stroke-width="2.2"/></svg>
<div class="a " style="left:0.0px;top:313.5px;width:499.5px;height:33.0px;background:#fff;"></div>
<span class="t" id="t53" style="top:319.4px;font-size:21.8px;color:#111;letter-spacing:0.106px;left:7.7px;">Navigation Tree</span>
<svg class="a" style="left:475px;top:321.5px" width="18" height="17" viewBox="0 0 18 17"><path d="M2 2l14 13M16 2L2 15" stroke="#222" stroke-width="3.2" fill="none"/></svg>
<div class="a " style="left:0.0px;top:346.5px;width:499.5px;height:47.0px;background:#f0f0f0;"></div>
<div class="a " style="left:0.0px;top:352.6px;width:499.6px;height:35.4px;background:#fff;border:2px solid #cfcfcf;box-sizing:border-box;"></div>
<span class="t" id="t54" style="top:360.4px;font-size:23px;color:#b3b3b3;letter-spacing:-1.134px;left:7.3px;">Search</span>
<div class="a " style="left:0.0px;top:393.5px;width:499.8px;height:1074.0px;background:#fff;border:2px solid #a2a2a2;box-sizing:border-box;"></div>
<div class="a " style="left:466.4px;top:397.0px;width:31.4px;height:1068.5px;background:#f0f0f0;"></div>
<div class="a " style="left:466.4px;top:658.0px;width:30.6px;height:751.5px;background:#cdcdcd;"></div>
<svg class="a" style="left:472px;top:408px" width="19" height="13" viewBox="0 0 19 13"><path d="M2 11L9.5 3.5L17 11" stroke="#555" stroke-width="3.2" fill="none"/></svg>
<svg class="a" style="left:472px;top:1443px" width="19" height="13" viewBox="0 0 19 13"><path d="M2 2L9.5 9.5L17 2" stroke="#555" stroke-width="3.2" fill="none"/></svg>
<div class="a " style="left:24.2px;top:397.0px;width:2.0px;height:1068.0px;background-image:repeating-linear-gradient(to bottom,#666 0 2px,transparent 2px 4px);"></div>
<div class="a " style="left:62.2px;top:970.5px;width:2.0px;height:338.0px;background-image:repeating-linear-gradient(to bottom,#666 0 2px,transparent 2px 4px);"></div>
<div class="a " style="left:62.2px;top:1386.5px;width:2.0px;height:50.0px;background-image:repeating-linear-gradient(to bottom,#666 0 2px,transparent 2px 4px);"></div>
<div class="a " style="left:100.2px;top:1000.5px;width:2.0px;height:20.0px;background-image:repeating-linear-gradient(to bottom,#666 0 2px,transparent 2px 4px);"></div>
<div class="a " style="left:24.8px;top:411.9px;width:21.2px;height:2.0px;background-image:repeating-linear-gradient(to right,#666 0 2px,transparent 2px 4px);"></div>
<svg class="a" style="left:47px;top:398.0px" width="28" height="30" viewBox="0 0 28 30"><path d="M2 5l12-3.5L26 5v18l-12 5.5L2 23z" fill="#e9e9e9" stroke="#777" stroke-width="1.6"/><path d="M2 5l12 4v19.5" fill="none" stroke="#999" stroke-width="1.2"/><path d="M9 6.5l8-3 8 3v9l-8 3.5-8-3.5z" fill="#3f8fc4" stroke="#1d5b86" stroke-width="1.4"/><path d="M9 6.5l8 3.2 8-3.2M17 9.7v9.3" fill="none" stroke="#bfe0f4" stroke-width="1.2"/></svg>
<span class="t" id="t55" style="top:399.3px;font-size:24px;color:#111;letter-spacing:-1.479px;left:88.0px;">Curves</span>
<div class="a " style="left:24.8px;top:443.9px;width:21.2px;height:2.0px;background-image:repeating-linear-gradient(to right,#666 0 2px,transparent 2px 4px);"></div>
<svg class="a" style="left:47px;top:430.0px" width="28" height="30" viewBox="0 0 28 30"><path d="M2 5l12-3.5L26 5v18l-12 5.5L2 23z" fill="#e9e9e9" stroke="#777" stroke-width="1.6"/><path d="M2 5l12 4v19.5" fill="none" stroke="#999" stroke-width="1.2"/><path d="M9 6.5l8-3 8 3v9l-8 3.5-8-3.5z" fill="#3f8fc4" stroke="#1d5b86" stroke-width="1.4"/><path d="M9 6.5l8 3.2 8-3.2M17 9.7v9.3" fill="none" stroke="#bfe0f4" stroke-width="1.2"/></svg>
<span class="t" id="t56" style="top:431.3px;font-size:24px;color:#111;letter-spacing:-2.080px;left:88.0px;">WCS</span>
<div class="a " style="left:24.8px;top:475.9px;width:21.2px;height:2.0px;background-image:repeating-linear-gradient(to right,#666 0 2px,transparent 2px 4px);"></div>
<svg class="a" style="left:47px;top:462.0px" width="28" height="30" viewBox="0 0 28 30"><path d="M2 5l12-3.5L26 5v18l-12 5.5L2 23z" fill="#e9e9e9" stroke="#777" stroke-width="1.6"/><path d="M2 5l12 4v19.5" fill="none" stroke="#999" stroke-width="1.2"/><path d="M9 6.5l8-3 8 3v9l-8 3.5-8-3.5z" fill="#3f8fc4" stroke="#1d5b86" stroke-width="1.4"/><path d="M9 6.5l8 3.2 8-3.2M17 9.7v9.3" fill="none" stroke="#bfe0f4" stroke-width="1.2"/></svg>
<span class="t" id="t57" style="top:463.3px;font-size:24px;color:#111;letter-spacing:-1.351px;left:88.0px;">Anchor Points</span>
<div class="a " style="left:24.8px;top:507.9px;width:21.2px;height:2.0px;background-image:repeating-linear-gradient(to right,#666 0 2px,transparent 2px 4px);"></div>
<svg class="a" style="left:47px;top:494.0px" width="28" height="30" viewBox="0 0 28 30"><path d="M2 5l12-3.5L26 5v18l-12 5.5L2 23z" fill="#e9e9e9" stroke="#777" stroke-width="1.6"/><path d="M2 5l12 4v19.5" fill="none" stroke="#999" stroke-width="1.2"/><path d="M9 6.5l8-3 8 3v9l-8 3.5-8-3.5z" fill="#3f8fc4" stroke="#1d5b86" stroke-width="1.4"/><path d="M9 6.5l8 3.2 8-3.2M17 9.7v9.3" fill="none" stroke="#bfe0f4" stroke-width="1.2"/></svg>
<span class="t" id="t58" style="top:495.3px;font-size:24px;color:#111;letter-spacing:-1.434px;left:88.0px;">Wires</span>
<div class="a " style="left:24.8px;top:539.9px;width:21.2px;height:2.0px;background-image:repeating-linear-gradient(to right,#666 0 2px,transparent 2px 4px);"></div>
<svg class="a" style="left:47px;top:526.0px" width="28" height="30" viewBox="0 0 28 30"><path d="M2 5l12-3.5L26 5v18l-12 5.5L2 23z" fill="#e9e9e9" stroke="#777" stroke-width="1.6"/><path d="M2 5l12 4v19.5" fill="none" stroke="#999" stroke-width="1.2"/><path d="M9 6.5l8-3 8 3v9l-8 3.5-8-3.5z" fill="#3f8fc4" stroke="#1d5b86" stroke-width="1.4"/><path d="M9 6.5l8 3.2 8-3.2M17 9.7v9.3" fill="none" stroke="#bfe0f4" stroke-width="1.2"/></svg>
<span class="t" id="t59" style="top:527.3px;font-size:24px;color:#111;letter-spacing:-1.242px;left:88.0px;">Voxel Data</span>
<div class="a " style="left:24.8px;top:571.9px;width:21.2px;height:2.0px;background-image:repeating-linear-gradient(to right,#666 0 2px,transparent 2px 4px);"></div>
<svg class="a" style="left:47px;top:558.0px" width="28" height="30" viewBox="0 0 28 30"><path d="M2 5l12-3.5L26 5v18l-12 5.5L2 23z" fill="#e9e9e9" stroke="#777" stroke-width="1.6"/><path d="M2 5l12 4v19.5" fill="none" stroke="#999" stroke-width="1.2"/><path d="M9 6.5l8-3 8 3v9l-8 3.5-8-3.5z" fill="#3f8fc4" stroke="#1d5b86" stroke-width="1.4"/><path d="M9 6.5l8 3.2 8-3.2M17 9.7v9.3" fill="none" stroke="#bfe0f4" stroke-width="1.2"/></svg>
<span class="t" id="t60" style="top:559.3px;font-size:24px;color:#111;letter-spacing:-1.673px;left:88.0px;">Dimensions</span>
<div class="a " style="left:24.8px;top:603.9px;width:21.2px;height:2.0px;background-image:repeating-linear-gradient(to right,#666 0 2px,transparent 2px 4px);"></div>
<svg class="a" style="left:48px;top:590.5px" width="28" height="28" viewBox="0 0 28 28"><rect x="12.2" y="0.6" width="3.6" height="5" fill="#9a9a9a" transform="rotate(0 14 14)"/><rect x="12.2" y="0.6" width="3.6" height="5" fill="#9a9a9a" transform="rotate(30 14 14)"/><rect x="12.2" y="0.6" width="3.6" height="5" fill="#9a9a9a" transform="rotate(60 14 14)"/><rect x="12.2" y="0.6" width="3.6" height="5" fill="#9a9a9a" transform="rotate(90 14 14)"/><rect x="12.2" y="0.6" width="3.6" height="5" fill="#9a9a9a" transform="rotate(120 14 14)"/><rect x="12.2" y="0.6" width="3.6" height="5" fill="#9a9a9a" transform="rotate(150 14 14)"/><rect x="12.2" y="0.6" width="3.6" height="5" fill="#9a9a9a" transform="rotate(180 14 14)"/><rect x="12.2" y="0.6" width="3.6" height="5" fill="#9a9a9a" transform="rotate(210 14 14)"/><rect x="12.2" y="0.6" width="3.6" height="5" fill="#9a9a9a" transform="rotate(240 14 14)"/><rect x="12.2" y="0.6" width="3.6" height="5" fill="#9a9a9a" transform="rotate(270 14 14)"/><rect x="12.2" y="0.6" width="3.6" height="5" fill="#9a9a9a" transform="rotate(300 14 14)"/><rect x="12.2" y="0.6" width="3.6" height="5" fill="#9a9a9a" transform="rotate(330 14 14)"/><circle cx="14" cy="14" r="9.6" fill="#e6e6e6" stroke="#8f8f8f" stroke-width="3.4"/><circle cx="14" cy="14" r="5.2" fill="#fff" stroke="#c4c4c4" stroke-width="1.2"/></svg>
<span class="t" id="t61" style="top:591.3px;font-size:24px;color:#111;letter-spacing:-1.331px;left:88.0px;">Design Space</span>
<div class="a " style="left:24.8px;top:635.9px;width:21.2px;height:2.0px;background-image:repeating-linear-gradient(to right,#666 0 2px,transparent 2px 4px);"></div>
<svg class="a" style="left:48px;top:622.5px" width="28" height="28" viewBox="0 0 28 28"><rect x="12.2" y="0.6" width="3.6" height="5" fill="#9a9a9a" transform="rotate(0 14 14)"/><rect x="12.2" y="0.6" width="3.6" height="5" fill="#9a9a9a" transform="rotate(30 14 14)"/><rect x="12.2" y="0.6" width="3.6" height="5" fill="#9a9a9a" transform="rotate(60 14 14)"/><rect x="12.2" y="0.6" width="3.6" height="5" fill="#9a9a9a" transform="rotate(90 14 14)"/><rect x="12.2" y="0.6" width="3.6" height="5" fill="#9a9a9a" transform="rotate(120 14 14)"/><rect x="12.2" y="0.6" width="3.6" height="5" fill="#9a9a9a" transform="rotate(150 14 14)"/><rect x="12.2" y="0.6" width="3.6" height="5" fill="#9a9a9a" transform="rotate(180 14 14)"/><rect x="12.2" y="0.6" width="3.6" height="5" fill="#9a9a9a" transform="rotate(210 14 14)"/><rect x="12.2" y="0.6" width="3.6" height="5" fill="#9a9a9a" transform="rotate(240 14 14)"/><rect x="12.2" y="0.6" width="3.6" height="5" fill="#9a9a9a" transform="rotate(270 14 14)"/><rect x="12.2" y="0.6" width="3.6" height="5" fill="#9a9a9a" transform="rotate(300 14 14)"/><rect x="12.2" y="0.6" width="3.6" height="5" fill="#9a9a9a" transform="rotate(330 14 14)"/><circle cx="14" cy="14" r="9.6" fill="#e6e6e6" stroke="#8f8f8f" stroke-width="3.4"/><circle cx="14" cy="14" r="5.2" fill="#fff" stroke="#c4c4c4" stroke-width="1.2"/></svg>
<span class="t" id="t62" style="top:623.3px;font-size:24px;color:#111;letter-spacing:-1.686px;left:88.0px;">Lumped Elements</span>
<div class="a " style="left:24.8px;top:667.9px;width:21.2px;height:2.0px;background-image:repeating-linear-gradient(to right,#666 0 2px,transparent 2px 4px);"></div>
<svg class="a" style="left:48px;top:654.5px" width="28" height="28" viewBox="0 0 28 28"><rect x="12.2" y="0.6" width="3.6" height="5" fill="#9a9a9a" transform="rotate(0 14 14)"/><rect x="12.2" y="0.6" width="3.6" height="5" fill="#9a9a9a" transform="rotate(30 14 14)"/><rect x="12.2" y="0.6" width="3.6" height="5" fill="#9a9a9a" transform="rotate(60 14 14)"/><rect x="12.2" y="0.6" width="3.6" height="5" fill="#9a9a9a" transform="rotate(90 14 14)"/><rect x="12.2" y="0.6" width="3.6" height="5" fill="#9a9a9a" transform="rotate(120 14 14)"/><rect x="12.2" y="0.6" width="3.6" height="5" fill="#9a9a9a" transform="rotate(150 14 14)"/><rect x="12.2" y="0.6" width="3.6" height="5" fill="#9a9a9a" transform="rotate(180 14 14)"/><rect x="12.2" y="0.6" width="3.6" height="5" fill="#9a9a9a" transform="rotate(210 14 14)"/><rect x="12.2" y="0.6" width="3.6" height="5" fill="#9a9a9a" transform="rotate(240 14 14)"/><rect x="12.2" y="0.6" width="3.6" height="5" fill="#9a9a9a" transform="rotate(270 14 14)"/><rect x="12.2" y="0.6" width="3.6" height="5" fill="#9a9a9a" transform="rotate(300 14 14)"/><rect x="12.2" y="0.6" width="3.6" height="5" fill="#9a9a9a" transform="rotate(330 14 14)"/><circle cx="14" cy="14" r="9.6" fill="#e6e6e6" stroke="#8f8f8f" stroke-width="3.4"/><circle cx="14" cy="14" r="5.2" fill="#fff" stroke="#c4c4c4" stroke-width="1.2"/></svg>
<span class="t" id="t63" style="top:655.3px;font-size:24px;color:#111;letter-spacing:-1.056px;left:88.0px;">Plane Wave</span>
<div class="a " style="left:24.8px;top:699.9px;width:21.2px;height:2.0px;background-image:repeating-linear-gradient(to right,#666 0 2px,transparent 2px 4px);"></div>
<svg class="a" style="left:48px;top:686.5px" width="28" height="28" viewBox="0 0 28 28"><rect x="12.2" y="0.6" width="3.6" height="5" fill="#9a9a9a" transform="rotate(0 14 14)"/><rect x="12.2" y="0.6" width="3.6" height="5" fill="#9a9a9a" transform="rotate(30 14 14)"/><rect x="12.2" y="0.6" width="3.6" height="5" fill="#9a9a9a" transform="rotate(60 14 14)"/><rect x="12.2" y="0.6" width="3.6" height="5" fill="#9a9a9a" transform="rotate(90 14 14)"/><rect x="12.2" y="0.6" width="3.6" height="5" fill="#9a9a9a" transform="rotate(120 14 14)"/><rect x="12.2" y="0.6" width="3.6" height="5" fill="#9a9a9a" transform="rotate(150 14 14)"/><rect x="12.2" y="0.6" width="3.6" height="5" fill="#9a9a9a" transform="rotate(180 14 14)"/><rect x="12.2" y="0.6" width="3.6" height="5" fill="#9a9a9a" transform="rotate(210 14 14)"/><rect x="12.2" y="0.6" width="3.6" height="5" fill="#9a9a9a" transform="rotate(240 14 14)"/><rect x="12.2" y="0.6" width="3.6" height="5" fill="#9a9a9a" transform="rotate(270 14 14)"/><rect x="12.2" y="0.6" width="3.6" height="5" fill="#9a9a9a" transform="rotate(300 14 14)"/><rect x="12.2" y="0.6" width="3.6" height="5" fill="#9a9a9a" transform="rotate(330 14 14)"/><circle cx="14" cy="14" r="9.6" fill="#e6e6e6" stroke="#8f8f8f" stroke-width="3.4"/><circle cx="14" cy="14" r="5.2" fill="#fff" stroke="#c4c4c4" stroke-width="1.2"/></svg>
<span class="t" id="t64" style="top:687.3px;font-size:24px;color:#111;letter-spacing:-1.443px;left:88.0px;">Farfield Sources</span>
<div class="a " style="left:24.8px;top:731.9px;width:21.2px;height:2.0px;background-image:repeating-linear-gradient(to right,#666 0 2px,transparent 2px 4px);"></div>
<svg class="a" style="left:48px;top:718.5px" width="28" height="28" viewBox="0 0 28 28"><rect x="12.2" y="0.6" width="3.6" height="5" fill="#9a9a9a" transform="rotate(0 14 14)"/><rect x="12.2" y="0.6" width="3.6" height="5" fill="#9a9a9a" transform="rotate(30 14 14)"/><rect x="12.2" y="0.6" width="3.6" height="5" fill="#9a9a9a" transform="rotate(60 14 14)"/><rect x="12.2" y="0.6" width="3.6" height="5" fill="#9a9a9a" transform="rotate(90 14 14)"/><rect x="12.2" y="0.6" width="3.6" height="5" fill="#9a9a9a" transform="rotate(120 14 14)"/><rect x="12.2" y="0.6" width="3.6" height="5" fill="#9a9a9a" transform="rotate(150 14 14)"/><rect x="12.2" y="0.6" width="3.6" height="5" fill="#9a9a9a" transform="rotate(180 14 14)"/><rect x="12.2" y="0.6" width="3.6" height="5" fill="#9a9a9a" transform="rotate(210 14 14)"/><rect x="12.2" y="0.6" width="3.6" height="5" fill="#9a9a9a" transform="rotate(240 14 14)"/><rect x="12.2" y="0.6" width="3.6" height="5" fill="#9a9a9a" transform="rotate(270 14 14)"/><rect x="12.2" y="0.6" width="3.6" height="5" fill="#9a9a9a" transform="rotate(300 14 14)"/><rect x="12.2" y="0.6" width="3.6" height="5" fill="#9a9a9a" transform="rotate(330 14 14)"/><circle cx="14" cy="14" r="9.6" fill="#e6e6e6" stroke="#8f8f8f" stroke-width="3.4"/><circle cx="14" cy="14" r="5.2" fill="#fff" stroke="#c4c4c4" stroke-width="1.2"/></svg>
<span class="t" id="t65" style="top:719.3px;font-size:24px;color:#111;letter-spacing:-1.452px;left:88.0px;">Field Sources</span>
<div class="a " style="left:24.8px;top:763.9px;width:21.2px;height:2.0px;background-image:repeating-linear-gradient(to right,#666 0 2px,transparent 2px 4px);"></div>
<div class="a " style="left:15.9px;top:756.0px;width:17.8px;height:17.8px;border:2px solid #949494;box-sizing:border-box;border-radius:2px;background:linear-gradient(135deg,#fff 30%,#e2e2e2);"></div>
<div class="a " style="left:20.0px;top:763.9px;width:9.6px;height:2.0px;background:#2a3f95;"></div>
<div class="a " style="left:23.8px;top:760.1px;width:2.0px;height:9.6px;background:#2a3f95;"></div>
<svg class="a" style="left:48px;top:750.5px" width="28" height="28" viewBox="0 0 28 28"><rect x="12.2" y="0.6" width="3.6" height="5" fill="#9a9a9a" transform="rotate(0 14 14)"/><rect x="12.2" y="0.6" width="3.6" height="5" fill="#9a9a9a" transform="rotate(30 14 14)"/><rect x="12.2" y="0.6" width="3.6" height="5" fill="#9a9a9a" transform="rotate(60 14 14)"/><rect x="12.2" y="0.6" width="3.6" height="5" fill="#9a9a9a" transform="rotate(90 14 14)"/><rect x="12.2" y="0.6" width="3.6" height="5" fill="#9a9a9a" transform="rotate(120 14 14)"/><rect x="12.2" y="0.6" width="3.6" height="5" fill="#9a9a9a" transform="rotate(150 14 14)"/><rect x="12.2" y="0.6" width="3.6" height="5" fill="#9a9a9a" transform="rotate(180 14 14)"/><rect x="12.2" y="0.6" width="3.6" height="5" fill="#9a9a9a" transform="rotate(210 14 14)"/><rect x="12.2" y="0.6" width="3.6" height="5" fill="#9a9a9a" transform="rotate(240 14 14)"/><rect x="12.2" y="0.6" width="3.6" height="5" fill="#9a9a9a" transform="rotate(270 14 14)"/><rect x="12.2" y="0.6" width="3.6" height="5" fill="#9a9a9a" transform="rotate(300 14 14)"/><rect x="12.2" y="0.6" width="3.6" height="5" fill="#9a9a9a" transform="rotate(330 14 14)"/><circle cx="14" cy="14" r="9.6" fill="#e6e6e6" stroke="#8f8f8f" stroke-width="3.4"/><circle cx="14" cy="14" r="5.2" fill="#fff" stroke="#c4c4c4" stroke-width="1.2"/></svg>
<span class="t" id="t66" style="top:751.3px;font-size:24px;color:#111;letter-spacing:-1.511px;left:88.0px;">Ports</span>
<div class="a " style="left:24.8px;top:795.9px;width:21.2px;height:2.0px;background-image:repeating-linear-gradient(to right,#666 0 2px,transparent 2px 4px);"></div>
<div class="a " style="left:15.9px;top:788.0px;width:17.8px;height:17.8px;border:2px solid #949494;box-sizing:border-box;border-radius:2px;background:linear-gradient(135deg,#fff 30%,#e2e2e2);"></div>
<div class="a " style="left:20.0px;top:795.9px;width:9.6px;height:2.0px;background:#2a3f95;"></div>
<div class="a " style="left:23.8px;top:792.1px;width:2.0px;height:9.6px;background:#2a3f95;"></div>
<svg class="a" style="left:48px;top:782.5px" width="28" height="28" viewBox="0 0 28 28"><rect x="12.2" y="0.6" width="3.6" height="5" fill="#9a9a9a" transform="rotate(0 14 14)"/><rect x="12.2" y="0.6" width="3.6" height="5" fill="#9a9a9a" transform="rotate(30 14 14)"/><rect x="12.2" y="0.6" width="3.6" height="5" fill="#9a9a9a" transform="rotate(60 14 14)"/><rect x="12.2" y="0.6" width="3.6" height="5" fill="#9a9a9a" transform="rotate(90 14 14)"/><rect x="12.2" y="0.6" width="3.6" height="5" fill="#9a9a9a" transform="rotate(120 14 14)"/><rect x="12.2" y="0.6" width="3.6" height="5" fill="#9a9a9a" transform="rotate(150 14 14)"/><rect x="12.2" y="0.6" width="3.6" height="5" fill="#9a9a9a" transform="rotate(180 14 14)"/><rect x="12.2" y="0.6" width="3.6" height="5" fill="#9a9a9a" transform="rotate(210 14 14)"/><rect x="12.2" y="0.6" width="3.6" height="5" fill="#9a9a9a" transform="rotate(240 14 14)"/><rect x="12.2" y="0.6" width="3.6" height="5" fill="#9a9a9a" transform="rotate(270 14 14)"/><rect x="12.2" y="0.6" width="3.6" height="5" fill="#9a9a9a" transform="rotate(300 14 14)"/><rect x="12.2" y="0.6" width="3.6" height="5" fill="#9a9a9a" transform="rotate(330 14 14)"/><circle cx="14" cy="14" r="9.6" fill="#e6e6e6" stroke="#8f8f8f" stroke-width="3.4"/><circle cx="14" cy="14" r="5.2" fill="#fff" stroke="#c4c4c4" stroke-width="1.2"/></svg>
<span class="t" id="t67" style="top:783.3px;font-size:24px;color:#111;letter-spacing:-1.271px;left:88.0px;">Excitation Signals</span>
<div class="a " style="left:24.8px;top:827.9px;width:21.2px;height:2.0px;background-image:repeating-linear-gradient(to right,#666 0 2px,transparent 2px 4px);"></div>
<div class="a " style="left:15.9px;top:820.0px;width:17.8px;height:17.8px;border:2px solid #949494;box-sizing:border-box;border-radius:2px;background:linear-gradient(135deg,#fff 30%,#e2e2e2);"></div>
<div class="a " style="left:20.0px;top:827.9px;width:9.6px;height:2.0px;background:#2a3f95;"></div>
<div class="a " style="left:23.8px;top:824.1px;width:2.0px;height:9.6px;background:#2a3f95;"></div>
<svg class="a" style="left:48px;top:814.5px" width="28" height="28" viewBox="0 0 28 28"><rect x="12.2" y="0.6" width="3.6" height="5" fill="#9a9a9a" transform="rotate(0 14 14)"/><rect x="12.2" y="0.6" width="3.6" height="5" fill="#9a9a9a" transform="rotate(30 14 14)"/><rect x="12.2" y="0.6" width="3.6" height="5" fill="#9a9a9a" transform="rotate(60 14 14)"/><rect x="12.2" y="0.6" width="3.6" height="5" fill="#9a9a9a" transform="rotate(90 14 14)"/><rect x="12.2" y="0.6" width="3.6" height="5" fill="#9a9a9a" transform="rotate(120 14 14)"/><rect x="12.2" y="0.6" width="3.6" height="5" fill="#9a9a9a" transform="rotate(150 14 14)"/><rect x="12.2" y="0.6" width="3.6" height="5" fill="#9a9a9a" transform="rotate(180 14 14)"/><rect x="12.2" y="0.6" width="3.6" height="5" fill="#9a9a9a" transform="rotate(210 14 14)"/><rect x="12.2" y="0.6" width="3.6" height="5" fill="#9a9a9a" transform="rotate(240 14 14)"/><rect x="12.2" y="0.6" width="3.6" height="5" fill="#9a9a9a" transform="rotate(270 14 14)"/><rect x="12.2" y="0.6" width="3.6" height="5" fill="#9a9a9a" transform="rotate(300 14 14)"/><rect x="12.2" y="0.6" width="3.6" height="5" fill="#9a9a9a" transform="rotate(330 14 14)"/><circle cx="14" cy="14" r="9.6" fill="#e6e6e6" stroke="#8f8f8f" stroke-width="3.4"/><circle cx="14" cy="14" r="5.2" fill="#fff" stroke="#c4c4c4" stroke-width="1.2"/></svg>
<span class="t" id="t68" style="top:815.3px;font-size:24px;color:#111;letter-spacing:-1.468px;left:88.0px;">Field Monitors</span>
<div class="a " style="left:24.8px;top:859.9px;width:21.2px;height:2.0px;background-image:repeating-linear-gradient(to right,#666 0 2px,transparent 2px 4px);"></div>
<svg class="a" style="left:48px;top:846.5px" width="28" height="28" viewBox="0 0 28 28"><rect x="12.2" y="0.6" width="3.6" height="5" fill="#9a9a9a" transform="rotate(0 14 14)"/><rect x="12.2" y="0.6" width="3.6" height="5" fill="#9a9a9a" transform="rotate(30 14 14)"/><rect x="12.2" y="0.6" width="3.6" height="5" fill="#9a9a9a" transform="rotate(60 14 14)"/><rect x="12.2" y="0.6" width="3.6" height="5" fill="#9a9a9a" transform="rotate(90 14 14)"/><rect x="12.2" y="0.6" width="3.6" height="5" fill="#9a9a9a" transform="rotate(120 14 14)"/><rect x="12.2" y="0.6" width="3.6" height="5" fill="#9a9a9a" transform="rotate(150 14 14)"/><rect x="12.2" y="0.6" width="3.6" height="5" fill="#9a9a9a" transform="rotate(180 14 14)"/><rect x="12.2" y="0.6" width="3.6" height="5" fill="#9a9a9a" transform="rotate(210 14 14)"/><rect x="12.2" y="0.6" width="3.6" height="5" fill="#9a9a9a" transform="rotate(240 14 14)"/><rect x="12.2" y="0.6" width="3.6" height="5" fill="#9a9a9a" transform="rotate(270 14 14)"/><rect x="12.2" y="0.6" width="3.6" height="5" fill="#9a9a9a" transform="rotate(300 14 14)"/><rect x="12.2" y="0.6" width="3.6" height="5" fill="#9a9a9a" transform="rotate(330 14 14)"/><circle cx="14" cy="14" r="9.6" fill="#e6e6e6" stroke="#8f8f8f" stroke-width="3.4"/><circle cx="14" cy="14" r="5.2" fill="#fff" stroke="#c4c4c4" stroke-width="1.2"/></svg>
<span class="t" id="t69" style="top:847.3px;font-size:24px;color:#111;letter-spacing:-1.358px;left:88.0px;">Voltage and Current Monitors</span>
<div class="a " style="left:24.8px;top:891.9px;width:21.2px;height:2.0px;background-image:repeating-linear-gradient(to right,#666 0 2px,transparent 2px 4px);"></div>
<svg class="a" style="left:48px;top:878.5px" width="28" height="28" viewBox="0 0 28 28"><rect x="12.2" y="0.6" width="3.6" height="5" fill="#9a9a9a" transform="rotate(0 14 14)"/><rect x="12.2" y="0.6" width="3.6" height="5" fill="#9a9a9a" transform="rotate(30 14 14)"/><rect x="12.2" y="0.6" width="3.6" height="5" fill="#9a9a9a" transform="rotate(60 14 14)"/><rect x="12.2" y="0.6" width="3.6" height="5" fill="#9a9a9a" transform="rotate(90 14 14)"/><rect x="12.2" y="0.6" width="3.6" height="5" fill="#9a9a9a" transform="rotate(120 14 14)"/><rect x="12.2" y="0.6" width="3.6" height="5" fill="#9a9a9a" transform="rotate(150 14 14)"/><rect x="12.2" y="0.6" width="3.6" height="5" fill="#9a9a9a" transform="rotate(180 14 14)"/><rect x="12.2" y="0.6" width="3.6" height="5" fill="#9a9a9a" transform="rotate(210 14 14)"/><rect x="12.2" y="0.6" width="3.6" height="5" fill="#9a9a9a" transform="rotate(240 14 14)"/><rect x="12.2" y="0.6" width="3.6" height="5" fill="#9a9a9a" transform="rotate(270 14 14)"/><rect x="12.2" y="0.6" width="3.6" height="5" fill="#9a9a9a" transform="rotate(300 14 14)"/><rect x="12.2" y="0.6" width="3.6" height="5" fill="#9a9a9a" transform="rotate(330 14 14)"/><circle cx="14" cy="14" r="9.6" fill="#e6e6e6" stroke="#8f8f8f" stroke-width="3.4"/><circle cx="14" cy="14" r="5.2" fill="#fff" stroke="#c4c4c4" stroke-width="1.2"/></svg>
<span class="t" id="t70" style="top:879.3px;font-size:24px;color:#111;letter-spacing:-1.614px;left:88.0px;">Probes</span>
<div class="a " style="left:24.8px;top:923.9px;width:21.2px;height:2.0px;background-image:repeating-linear-gradient(to right,#666 0 2px,transparent 2px 4px);"></div>
<div class="a " style="left:15.9px;top:916.0px;width:17.8px;height:17.8px;border:2px solid #949494;box-sizing:border-box;border-radius:2px;background:linear-gradient(135deg,#fff 30%,#e2e2e2);"></div>
<div class="a " style="left:20.0px;top:923.9px;width:9.6px;height:2.0px;background:#2a3f95;"></div>
<div class="a " style="left:23.8px;top:920.1px;width:2.0px;height:9.6px;background:#2a3f95;"></div>
<svg class="a" style="left:48px;top:910.5px" width="28" height="28" viewBox="0 0 28 28"><rect x="12.2" y="0.6" width="3.6" height="5" fill="#9a9a9a" transform="rotate(0 14 14)"/><rect x="12.2" y="0.6" width="3.6" height="5" fill="#9a9a9a" transform="rotate(30 14 14)"/><rect x="12.2" y="0.6" width="3.6" height="5" fill="#9a9a9a" transform="rotate(60 14 14)"/><rect x="12.2" y="0.6" width="3.6" height="5" fill="#9a9a9a" transform="rotate(90 14 14)"/><rect x="12.2" y="0.6" width="3.6" height="5" fill="#9a9a9a" transform="rotate(120 14 14)"/><rect x="12.2" y="0.6" width="3.6" height="5" fill="#9a9a9a" transform="rotate(150 14 14)"/><rect x="12.2" y="0.6" width="3.6" height="5" fill="#9a9a9a" transform="rotate(180 14 14)"/><rect x="12.2" y="0.6" width="3.6" height="5" fill="#9a9a9a" transform="rotate(210 14 14)"/><rect x="12.2" y="0.6" width="3.6" height="5" fill="#9a9a9a" transform="rotate(240 14 14)"/><rect x="12.2" y="0.6" width="3.6" height="5" fill="#9a9a9a" transform="rotate(270 14 14)"/><rect x="12.2" y="0.6" width="3.6" height="5" fill="#9a9a9a" transform="rotate(300 14 14)"/><rect x="12.2" y="0.6" width="3.6" height="5" fill="#9a9a9a" transform="rotate(330 14 14)"/><circle cx="14" cy="14" r="9.6" fill="#e6e6e6" stroke="#8f8f8f" stroke-width="3.4"/><circle cx="14" cy="14" r="5.2" fill="#fff" stroke="#c4c4c4" stroke-width="1.2"/></svg>
<span class="t" id="t71" style="top:911.3px;font-size:24px;color:#111;letter-spacing:-1.732px;left:88.0px;">Mesh</span>
<div class="a " style="left:24.8px;top:955.9px;width:21.2px;height:2.0px;background-image:repeating-linear-gradient(to right,#666 0 2px,transparent 2px 4px);"></div>
<div class="a " style="left:15.9px;top:948.0px;width:17.8px;height:17.8px;border:2px solid #949494;box-sizing:border-box;border-radius:2px;background:linear-gradient(135deg,#fff 30%,#e2e2e2);"></div>
<div class="a " style="left:20.0px;top:955.9px;width:9.6px;height:2.0px;background:#2a3f95;"></div>
<svg class="a" style="left:47.5px;top:942.5px" width="29" height="28" viewBox="0 0 29 28"><rect x="1.6" y="1.2" width="26" height="25" fill="#e8e8e8" stroke="#b5b5b5" stroke-width="1.2"/><path d="M1.6 1v26h27" fill="none" stroke="#3c3c3c" stroke-width="2.2"/><path d="M3 16c4-9 7-8 10-3s7 2 14-10" fill="none" stroke="#3a7ca5" stroke-width="2.2"/></svg>
<span class="t" id="t72" style="top:943.3px;font-size:24px;color:#111;letter-spacing:-1.372px;left:88.0px;">1D Results</span>
<div class="a " style="left:62.8px;top:987.9px;width:19.6px;height:2.0px;background-image:repeating-linear-gradient(to right,#666 0 2px,transparent 2px 4px);"></div>
<div class="a " style="left:53.9px;top:980.0px;width:17.8px;height:17.8px;border:2px solid #949494;box-sizing:border-box;border-radius:2px;background:linear-gradient(135deg,#fff 30%,#e2e2e2);"></div>
<div class="a " style="left:58.0px;top:987.9px;width:9.6px;height:2.0px;background:#2a3f95;"></div>
<svg class="a" style="left:84.4px;top:973.0px" width="29" height="28" viewBox="0 0 29 28"><path d="M1.5 1.5h10.5l1.5 2.5H26v3H1.5z" fill="#bdbdbd" stroke="#8a8a8a" stroke-width="1.2"/><rect x="1.7" y="5.2" width="25.6" height="20.6" fill="url(#fg)" stroke="#7d7d7d" stroke-width="2.6"/></svg>
<span class="t" id="t73" style="top:975.3px;font-size:24px;color:#111;letter-spacing:-1.824px;left:126.7px;">S-Parameters</span>
<div class="a " style="left:100.9px;top:1019.9px;width:21.1px;height:2.0px;background-image:repeating-linear-gradient(to right,#666 0 2px,transparent 2px 4px);"></div>
<svg class="a" style="left:123.5px;top:1006.0px" width="29" height="28" viewBox="0 0 29 28"><rect x="1.2" y="1.2" width="26.6" height="25.6" fill="#e6e6e6" stroke="#9a9a9a" stroke-width="1.6"/><path d="M1.3 27.5V1.3h27" fill="none" stroke="#333" stroke-width="2.2"/><path d="M1 14h27" stroke="#555" stroke-width="1.3"/><path d="M3 14c2-11 7-11 10 0s8 11 11 0" fill="none" stroke="#d22" stroke-width="2.2"/><path d="M5 14c2 7 6 7 8 0s7-7 10 0" fill="none" stroke="#47a" stroke-width="1.6"/></svg>
<span class="t" id="t74" style="top:1007.3px;font-size:24px;color:#111;letter-spacing:-1.229px;left:164.4px;">S1,1</span>
<div class="a " style="left:62.8px;top:1051.9px;width:19.6px;height:2.0px;background-image:repeating-linear-gradient(to right,#666 0 2px,transparent 2px 4px);"></div>
<div class="a " style="left:53.9px;top:1044.0px;width:17.8px;height:17.8px;border:2px solid #949494;box-sizing:border-box;border-radius:2px;background:linear-gradient(135deg,#fff 30%,#e2e2e2);"></div>
<div class="a " style="left:58.0px;top:1051.9px;width:9.6px;height:2.0px;background:#2a3f95;"></div>
<div class="a " style="left:61.8px;top:1048.1px;width:2.0px;height:9.6px;background:#2a3f95;"></div>
<svg class="a" style="left:84.4px;top:1037.0px" width="29" height="28" viewBox="0 0 29 28"><path d="M1.5 1.5h10.5l1.5 2.5H26v3H1.5z" fill="#bdbdbd" stroke="#8a8a8a" stroke-width="1.2"/><rect x="1.7" y="5.2" width="25.6" height="20.6" fill="url(#fg)" stroke="#7d7d7d" stroke-width="2.6"/></svg>
<span class="t" id="t75" style="top:1039.3px;font-size:24px;color:#111;letter-spacing:-1.368px;left:126.7px;">Balance</span>
<div class="a " style="left:62.8px;top:1083.9px;width:19.6px;height:2.0px;background-image:repeating-linear-gradient(to right,#666 0 2px,transparent 2px 4px);"></div>
<div class="a " style="left:53.9px;top:1076.0px;width:17.8px;height:17.8px;border:2px solid #949494;box-sizing:border-box;border-radius:2px;background:linear-gradient(135deg,#fff 30%,#e2e2e2);"></div>
<div class="a " style="left:58.0px;top:1083.9px;width:9.6px;height:2.0px;background:#2a3f95;"></div>
<div class="a " style="left:61.8px;top:1080.1px;width:2.0px;height:9.6px;background:#2a3f95;"></div>
<svg class="a" style="left:84.4px;top:1069.0px" width="29" height="28" viewBox="0 0 29 28"><path d="M1.5 1.5h10.5l1.5 2.5H26v3H1.5z" fill="#bdbdbd" stroke="#8a8a8a" stroke-width="1.2"/><rect x="1.7" y="5.2" width="25.6" height="20.6" fill="url(#fg)" stroke="#7d7d7d" stroke-width="2.6"/></svg>
<span class="t" id="t76" style="top:1071.3px;font-size:24px;color:#111;letter-spacing:-1.474px;left:126.7px;">Power</span>
<div class="a " style="left:62.8px;top:1115.9px;width:19.6px;height:2.0px;background-image:repeating-linear-gradient(to right,#666 0 2px,transparent 2px 4px);"></div>
<div class="a " style="left:53.9px;top:1108.0px;width:17.8px;height:17.8px;border:2px solid #949494;box-sizing:border-box;border-radius:2px;background:linear-gradient(135deg,#fff 30%,#e2e2e2);"></div>
<div class="a " style="left:58.0px;top:1115.9px;width:9.6px;height:2.0px;background:#2a3f95;"></div>
<div class="a " style="left:61.8px;top:1112.1px;width:2.0px;height:9.6px;background:#2a3f95;"></div>
<svg class="a" style="left:84.4px;top:1101.0px" width="29" height="28" viewBox="0 0 29 28"><path d="M1.5 1.5h10.5l1.5 2.5H26v3H1.5z" fill="#bdbdbd" stroke="#8a8a8a" stroke-width="1.2"/><rect x="1.7" y="5.2" width="25.6" height="20.6" fill="url(#fg)" stroke="#7d7d7d" stroke-width="2.6"/></svg>
<span class="t" id="t77" style="top:1103.3px;font-size:24px;color:#111;letter-spacing:-1.396px;left:126.7px;">Discrete Ports</span>
<div class="a " style="left:62.8px;top:1147.9px;width:19.6px;height:2.0px;background-image:repeating-linear-gradient(to right,#666 0 2px,transparent 2px 4px);"></div>
<div class="a " style="left:53.9px;top:1140.0px;width:17.8px;height:17.8px;border:2px solid #949494;box-sizing:border-box;border-radius:2px;background:linear-gradient(135deg,#fff 30%,#e2e2e2);"></div>
<div class="a " style="left:58.0px;top:1147.9px;width:9.6px;height:2.0px;background:#2a3f95;"></div>
<div class="a " style="left:61.8px;top:1144.1px;width:2.0px;height:9.6px;background:#2a3f95;"></div>
<svg class="a" style="left:84.4px;top:1133.0px" width="29" height="28" viewBox="0 0 29 28"><path d="M1.5 1.5h10.5l1.5 2.5H26v3H1.5z" fill="#bdbdbd" stroke="#8a8a8a" stroke-width="1.2"/><rect x="1.7" y="5.2" width="25.6" height="20.6" fill="url(#fg)" stroke="#7d7d7d" stroke-width="2.6"/></svg>
<span class="t" id="t78" style="top:1135.3px;font-size:24px;color:#111;letter-spacing:-1.201px;left:126.7px;">Convergence</span>
<div class="a " style="left:62.8px;top:1179.9px;width:19.6px;height:2.0px;background-image:repeating-linear-gradient(to right,#666 0 2px,transparent 2px 4px);"></div>
<div class="a " style="left:53.9px;top:1172.0px;width:17.8px;height:17.8px;border:2px solid #949494;box-sizing:border-box;border-radius:2px;background:linear-gradient(135deg,#fff 30%,#e2e2e2);"></div>
<div class="a " style="left:58.0px;top:1179.9px;width:9.6px;height:2.0px;background:#2a3f95;"></div>
<div class="a " style="left:61.8px;top:1176.1px;width:2.0px;height:9.6px;background:#2a3f95;"></div>
<svg class="a" style="left:84.4px;top:1165.0px" width="29" height="28" viewBox="0 0 29 28"><path d="M1.5 1.5h10.5l1.5 2.5H26v3H1.5z" fill="#bdbdbd" stroke="#8a8a8a" stroke-width="1.2"/><rect x="1.7" y="5.2" width="25.6" height="20.6" fill="url(#fg)" stroke="#7d7d7d" stroke-width="2.6"/></svg>
<span class="t" id="t79" style="top:1167.3px;font-size:24px;color:#111;letter-spacing:-1.308px;left:126.7px;">Adaptive Meshing</span>
<div class="a " style="left:62.8px;top:1211.9px;width:19.6px;height:2.0px;background-image:repeating-linear-gradient(to right,#666 0 2px,transparent 2px 4px);"></div>
<div class="a " style="left:53.9px;top:1204.0px;width:17.8px;height:17.8px;border:2px solid #949494;box-sizing:border-box;border-radius:2px;background:linear-gradient(135deg,#fff 30%,#e2e2e2);"></div>
<div class="a " style="left:58.0px;top:1211.9px;width:9.6px;height:2.0px;background:#2a3f95;"></div>
<div class="a " style="left:61.8px;top:1208.1px;width:2.0px;height:9.6px;background:#2a3f95;"></div>
<svg class="a" style="left:84.4px;top:1197.0px" width="29" height="28" viewBox="0 0 29 28"><path d="M1.5 1.5h10.5l1.5 2.5H26v3H1.5z" fill="#bdbdbd" stroke="#8a8a8a" stroke-width="1.2"/><rect x="1.7" y="5.2" width="25.6" height="20.6" fill="url(#fg)" stroke="#7d7d7d" stroke-width="2.6"/></svg>
<span class="t" id="t80" style="top:1199.3px;font-size:24px;color:#111;letter-spacing:-1.133px;left:126.7px;">Efficiencies</span>
<div class="a " style="left:62.8px;top:1243.9px;width:19.6px;height:2.0px;background-image:repeating-linear-gradient(to right,#666 0 2px,transparent 2px 4px);"></div>
<div class="a " style="left:53.9px;top:1236.0px;width:17.8px;height:17.8px;border:2px solid #949494;box-sizing:border-box;border-radius:2px;background:linear-gradient(135deg,#fff 30%,#e2e2e2);"></div>
<div class="a " style="left:58.0px;top:1243.9px;width:9.6px;height:2.0px;background:#2a3f95;"></div>
<div class="a " style="left:61.8px;top:1240.1px;width:2.0px;height:9.6px;background:#2a3f95;"></div>
<svg class="a" style="left:84.4px;top:1229.0px" width="29" height="28" viewBox="0 0 29 28"><path d="M1.5 1.5h10.5l1.5 2.5H26v3H1.5z" fill="#bdbdbd" stroke="#8a8a8a" stroke-width="1.2"/><rect x="1.7" y="5.2" width="25.6" height="20.6" fill="url(#fg)" stroke="#7d7d7d" stroke-width="2.6"/></svg>
<span class="t" id="t81" style="top:1231.3px;font-size:24px;color:#111;letter-spacing:-1.335px;left:126.7px;">VSWR</span>
<div class="a " style="left:62.8px;top:1275.9px;width:19.6px;height:2.0px;background-image:repeating-linear-gradient(to right,#666 0 2px,transparent 2px 4px);"></div>
<div class="a " style="left:53.9px;top:1268.0px;width:17.8px;height:17.8px;border:2px solid #949494;box-sizing:border-box;border-radius:2px;background:linear-gradient(135deg,#fff 30%,#e2e2e2);"></div>
<div class="a " style="left:58.0px;top:1275.9px;width:9.6px;height:2.0px;background:#2a3f95;"></div>
<div class="a " style="left:61.8px;top:1272.1px;width:2.0px;height:9.6px;background:#2a3f95;"></div>
<svg class="a" style="left:84.4px;top:1261.0px" width="29" height="28" viewBox="0 0 29 28"><path d="M1.5 1.5h10.5l1.5 2.5H26v3H1.5z" fill="#bdbdbd" stroke="#8a8a8a" stroke-width="1.2"/><rect x="1.7" y="5.2" width="25.6" height="20.6" fill="url(#fg)" stroke="#7d7d7d" stroke-width="2.6"/></svg>
<span class="t" id="t82" style="top:1263.3px;font-size:24px;color:#111;letter-spacing:-1.390px;left:126.7px;">Y Matrix</span>
<div class="a " style="left:62.8px;top:1307.9px;width:19.6px;height:2.0px;background-image:repeating-linear-gradient(to right,#666 0 2px,transparent 2px 4px);"></div>
<div class="a " style="left:53.9px;top:1300.0px;width:17.8px;height:17.8px;border:2px solid #949494;box-sizing:border-box;border-radius:2px;background:linear-gradient(135deg,#fff 30%,#e2e2e2);"></div>
<div class="a " style="left:58.0px;top:1307.9px;width:9.6px;height:2.0px;background:#2a3f95;"></div>
<div class="a " style="left:61.8px;top:1304.1px;width:2.0px;height:9.6px;background:#2a3f95;"></div>
<svg class="a" style="left:84.4px;top:1293.0px" width="29" height="28" viewBox="0 0 29 28"><path d="M1.5 1.5h10.5l1.5 2.5H26v3H1.5z" fill="#bdbdbd" stroke="#8a8a8a" stroke-width="1.2"/><rect x="1.7" y="5.2" width="25.6" height="20.6" fill="url(#fg)" stroke="#7d7d7d" stroke-width="2.6"/></svg>
<span class="t" id="t83" style="top:1295.3px;font-size:24px;color:#111;letter-spacing:-1.276px;left:126.7px;">Z Matrix</span>
<div class="a " style="left:24.8px;top:1339.9px;width:21.2px;height:2.0px;background-image:repeating-linear-gradient(to right,#666 0 2px,transparent 2px 4px);"></div>
<div class="a " style="left:15.9px;top:1332.0px;width:17.8px;height:17.8px;border:2px solid #949494;box-sizing:border-box;border-radius:2px;background:linear-gradient(135deg,#fff 30%,#e2e2e2);"></div>
<div class="a " style="left:20.0px;top:1339.9px;width:9.6px;height:2.0px;background:#2a3f95;"></div>
<div class="a " style="left:23.8px;top:1336.1px;width:2.0px;height:9.6px;background:#2a3f95;"></div>
<svg class="a" style="left:47.5px;top:1326.5px" width="29" height="28" viewBox="0 0 29 28"><rect x="1.6" y="1.2" width="26" height="25" fill="#e8e8e8" stroke="#b5b5b5" stroke-width="1.2"/><path d="M1.6 1v26h27" fill="none" stroke="#3c3c3c" stroke-width="2.2"/><path d="M3 16c4-9 7-8 10-3s7 2 14-10" fill="none" stroke="#3a7ca5" stroke-width="2.2"/></svg>
<span class="t" id="t84" style="top:1327.3px;font-size:24px;color:#111;letter-spacing:-0.944px;left:88.0px;">2D/3D Results</span>
<div class="a " style="left:24.8px;top:1371.9px;width:21.2px;height:2.0px;background-image:repeating-linear-gradient(to right,#666 0 2px,transparent 2px 4px);"></div>
<div class="a " style="left:15.9px;top:1364.0px;width:17.8px;height:17.8px;border:2px solid #949494;box-sizing:border-box;border-radius:2px;background:linear-gradient(135deg,#fff 30%,#e2e2e2);"></div>
<div class="a " style="left:20.0px;top:1371.9px;width:9.6px;height:2.0px;background:#2a3f95;"></div>
<svg class="a" style="left:47.5px;top:1358.5px" width="29" height="28" viewBox="0 0 29 28"><rect x="1.6" y="1.2" width="26" height="25" fill="#e8e8e8" stroke="#b5b5b5" stroke-width="1.2"/><path d="M1.6 1v26h27" fill="none" stroke="#3c3c3c" stroke-width="2.2"/><path d="M3 16c4-9 7-8 10-3s7 2 14-10" fill="none" stroke="#3a7ca5" stroke-width="2.2"/></svg>
<span class="t" id="t85" style="top:1359.3px;font-size:24px;color:#111;letter-spacing:-1.563px;left:88.0px;">Farfields</span>
<div class="a " style="left:62.8px;top:1403.9px;width:19.6px;height:2.0px;background-image:repeating-linear-gradient(to right,#666 0 2px,transparent 2px 4px);"></div>
<div class="a " style="left:53.9px;top:1396.0px;width:17.8px;height:17.8px;border:2px solid #949494;box-sizing:border-box;border-radius:2px;background:linear-gradient(135deg,#fff 30%,#e2e2e2);"></div>
<div class="a " style="left:58.0px;top:1403.9px;width:9.6px;height:2.0px;background:#2a3f95;"></div>
<div class="a " style="left:61.8px;top:1400.1px;width:2.0px;height:9.6px;background:#2a3f95;"></div>
<svg class="a" style="left:84.4px;top:1389.0px" width="29" height="28" viewBox="0 0 29 28"><path d="M1.5 1.5h10.5l1.5 2.5H26v3H1.5z" fill="#bdbdbd" stroke="#8a8a8a" stroke-width="1.2"/><rect x="1.7" y="5.2" width="25.6" height="20.6" fill="url(#fg)" stroke="#7d7d7d" stroke-width="2.6"/></svg>
<span class="t" id="t86" style="top:1391.3px;font-size:24px;color:#111;letter-spacing:-1.499px;left:126.7px;">Farfield Cuts</span>
<div class="a " style="left:62.8px;top:1435.9px;width:21.2px;height:2.0px;background-image:repeating-linear-gradient(to right,#666 0 2px,transparent 2px 4px);"></div>
<svg class="a" style="left:85.5px;top:1422.0px" width="29" height="28" viewBox="0 0 29 28"><rect x="1.2" y="1.2" width="26.6" height="25.6" fill="#e6e6e6" stroke="#9a9a9a" stroke-width="1.6"/><path d="M1.3 27.5V1.3h27" fill="none" stroke="#333" stroke-width="2.2"/><path d="M1 14h27" stroke="#555" stroke-width="1.3"/><path d="M3 14c2-11 7-11 10 0s8 11 11 0" fill="none" stroke="#d22" stroke-width="2.2"/><path d="M5 14c2 7 6 7 8 0s7-7 10 0" fill="none" stroke="#47a" stroke-width="1.6"/></svg>
<div class="a " style="left:122.4px;top:1421.0px;width:177.4px;height:31.5px;background:#c9c9c9;"></div>
<span class="t" id="t87" style="top:1423.3px;font-size:24px;color:#111;letter-spacing:-1.037px;left:125.0px;">farfield (f=1.05) [1]</span>
<div class="a " style="left:24.8px;top:1467.9px;width:21.2px;height:2.0px;background-image:repeating-linear-gradient(to right,#666 0 2px,transparent 2px 4px);"></div>
<svg class="a" style="left:47.5px;top:1454.5px" width="29" height="28" viewBox="0 0 29 28"><rect x="1.6" y="1.2" width="26" height="25" fill="#e8e8e8" stroke="#b5b5b5" stroke-width="1.2"/><path d="M1.6 1v26h27" fill="none" stroke="#3c3c3c" stroke-width="2.2"/><path d="M3 16c4-9 7-8 10-3s7 2 14-10" fill="none" stroke="#3a7ca5" stroke-width="2.2"/></svg>
<span class="t" id="t88" style="top:1455.3px;font-size:24px;color:#111;letter-spacing:-0.953px;left:88.0px;">Tables</span>
<div class="a " style="left:0.0px;top:1467.5px;width:505.0px;height:52.0px;background:#f0f0f0;"></div>
<div class="a " style="left:0.0px;top:1465.5px;width:499.8px;height:2.0px;background:#a2a2a2;"></div>
<div class="a " style="left:500.0px;top:313.5px;width:2060.0px;height:55.5px;background:#f0f0f0;"></div>
<svg class="a" style="left:536.0px;top:324.0px" width="32" height="32" viewBox="0 0 32 32"><rect width="32" height="32" fill="#00928a"/><path d="M5 13c4-5 7-5 10-2s6 3 9-1l4-1" fill="none" stroke="#e8fbf6" stroke-width="2.2"/><path d="M6 19c4-5 7-5 10-2s6 3 10-1l3 2" fill="none" stroke="#bfeee4" stroke-width="2"/><path d="M9 24c3-3 6-3 9-1s5 2 9-1" fill="none" stroke="#8fdccf" stroke-width="1.6"/></svg>
<span class="t" id="t89" style="top:331.4px;font-size:25px;color:#1a1a1a;letter-spacing:-1.596px;left:577.3px;">dipole_antenna</span>
<svg class="a" style="left:734.8px;top:330.5px" width="27" height="27" viewBox="0 0 27 27"><rect x="1" y="1" width="25" height="25" rx="4" fill="#b9b9b9" stroke="#a3a3a3" stroke-width="2"/><path d="M8 8l11 11M19 8L8 19" stroke="#fff" stroke-width="3.6"/></svg>
<svg class="a" style="left:814.0px;top:324.0px" width="32" height="32" viewBox="0 0 32 32"><rect width="32" height="32" fill="#00928a"/><path d="M5 13c4-5 7-5 10-2s6 3 9-1l4-1" fill="none" stroke="#e8fbf6" stroke-width="2.2"/><path d="M6 19c4-5 7-5 10-2s6 3 10-1l3 2" fill="none" stroke="#bfeee4" stroke-width="2"/><path d="M9 24c3-3 6-3 9-1s5 2 9-1" fill="none" stroke="#8fdccf" stroke-width="1.6"/></svg>
<span class="t" id="t90" style="top:331.4px;font-size:25px;color:#1a1a1a;letter-spacing:-1.423px;left:855.5px;">dipole-antenna-sample*</span>
<svg class="a" style="left:1096.0px;top:330.5px" width="27" height="27" viewBox="0 0 27 27"><rect x="1" y="1" width="25" height="25" rx="4" fill="#b9b9b9" stroke="#a3a3a3" stroke-width="2"/><path d="M8 8l11 11M19 8L8 19" stroke="#fff" stroke-width="3.6"/></svg>
<div class="a " style="left:1153.8px;top:314.5px;width:176.6px;height:55.0px;background:#fff;border:2.5px solid #d6d6d6;border-bottom:none;box-sizing:border-box;"></div>
<svg class="a" style="left:1176.0px;top:324.0px" width="32" height="32" viewBox="0 0 32 32"><rect width="32" height="32" fill="#00928a"/><path d="M5 13c4-5 7-5 10-2s6 3 9-1l4-1" fill="none" stroke="#e8fbf6" stroke-width="2.2"/><path d="M6 19c4-5 7-5 10-2s6 3 10-1l3 2" fill="none" stroke="#bfeee4" stroke-width="2"/><path d="M9 24c3-3 6-3 9-1s5 2 9-1" fill="none" stroke="#8fdccf" stroke-width="1.6"/></svg>
<span class="t" id="t91" style="top:329.4px;font-size:25px;color:#555;letter-spacing:-0.669px;left:1217.0px;">yagi*</span>
<svg class="a" style="left:1277.0px;top:328.6px" width="27" height="27" viewBox="0 0 27 27"><rect x="1" y="1" width="25" height="25" rx="4" fill="#e4553a" stroke="#c9432c" stroke-width="2"/><path d="M8 8l11 11M19 8L8 19" stroke="#fff" stroke-width="3.6"/></svg>
<div class="a " style="left:513.0px;top:368.2px;width:2045.5px;height:795.0px;background:#fff;border:2px solid #8e8e8e;box-sizing:border-box;"></div>
<div class="a " style="left:516.3px;top:371.5px;width:2039.0px;height:788.5px;background:#fff;border:1.6px solid #9c9c9c;box-sizing:border-box;"></div>
<svg class="a" style="left:1150px;top:380px" width="800" height="760" viewBox="0 0 800 760"><g fill="none" stroke="#000" stroke-width="1.7" stroke-dasharray="8.5 11"><circle cx="386.5" cy="386.5" r="65.8"/><circle cx="386.5" cy="386.5" r="131.6"/><circle cx="386.5" cy="386.5" r="197.5"/><line x1="386.5" y1="386.5" x2="518.1" y2="158.5"/><line x1="386.5" y1="386.5" x2="614.5" y2="254.8"/><line x1="386.5" y1="386.5" x2="614.5" y2="518.1"/><line x1="386.5" y1="386.5" x2="518.1" y2="614.5"/><line x1="386.5" y1="386.5" x2="254.8" y2="614.5"/><line x1="386.5" y1="386.5" x2="158.5" y2="518.2"/><line x1="386.5" y1="386.5" x2="158.5" y2="254.8"/><line x1="386.5" y1="386.5" x2="254.8" y2="158.5"/></g><circle cx="386.5" cy="386.5" r="263.3" fill="none" stroke="#000" stroke-width="2"/><path d="M123.2 386.5H649.8M386.5 123.2V386.5" stroke="#000" stroke-width="2" fill="none"/><path d="M452.3 386.5v7M320.7 386.5v7M386.5 320.7h-6M518.1 386.5v7M254.9 386.5v7M386.5 254.9h-6M584.0 386.5v7M189.0 386.5v7M386.5 189.0h-6" stroke="#000" stroke-width="2" fill="none"/><path d="M386.9,147.0 L403.5,151.6 L417.4,156.2 L433.5,164.3 L445.1,173.6 L452.0,184.0 L461.3,196.7 L464.7,207.1 L467.8,217.5 L468.2,230.2 L468.7,244.0 L468.2,260.2 L465.9,274.1 L462.4,288.0 L456.7,301.8 L452.0,315.7 L445.1,323.8 L441.6,333.7 L456.7,332.3 L470.5,328.4 L489.0,327.2 L500.6,331.9 L507.5,341.1 L508.7,352.7 L504.0,364.2 L493.6,373.5 L479.8,381.6 L456.7,388.5 L438.2,390.8 L424.3,393.1 L420.8,395.9 L428.9,404.7 L438.2,418.5 L449.7,434.7 L459.0,448.6 L468.2,464.8 L475.1,480.9 L478.6,497.1 L480.9,513.3 L482.1,529.5 L480.9,545.6 L478.6,561.8 L475.1,575.7 L468.2,589.6 L459.0,603.4 L447.4,612.7 L433.5,620.8 L415.1,627.7 L398.9,631.2 L386.9,632.3 L375.8,631.8 L361.9,628.8 L345.7,621.9 L331.9,613.8 L320.3,605.7 L308.8,591.9 L299.5,578.0 L294.9,564.1 L291.4,548.0 L290.3,531.8 L291.4,517.9 L293.7,501.7 L297.2,487.9 L304.1,471.7 L313.4,453.2 L322.6,439.3 L331.9,425.5 L341.1,409.3 L348.0,398.9 L350.4,394.3 L350.4,392.4 L331.9,390.8 L313.4,386.9 L294.9,381.6 L282.2,374.6 L271.8,365.4 L266.0,355.0 L265.3,343.4 L269.5,335.3 L279.9,328.4 L294.9,327.7 L311.1,331.4 L327.7,333.0 L323.8,320.3 L319.2,308.8 L314.5,297.2 L309.2,285.6 L306.4,274.1 L303.7,260.2 L301.8,244.0 L303.0,230.2 L305.3,216.3 L309.2,204.8 L312.2,193.2 L320.3,184.0 L328.4,173.6 L341.1,164.3 L357.3,156.2 L371.2,151.6 L386.9,147.0Z" fill="none" stroke="#ff0000" stroke-width="3.6" stroke-linejoin="round"/><circle cx="386.5" cy="386.5" r="236.5" fill="none" stroke="#6b8e23" stroke-width="4"/><line x1="386.5" y1="386.5" x2="274.0" y2="624.5" stroke="#1e90ff" stroke-width="3.2"/><line x1="386.5" y1="386.5" x2="499.0" y2="624.5" stroke="#1e90ff" stroke-width="3.2"/><line x1="386.0" y1="386.5" x2="386.0" y2="650.8" stroke="#0000ff" stroke-width="3.6"/></svg>
<span class="t" id="t92" style="top:397.8px;font-size:29.3px;color:#000;left:1333.0px;">Farfield Directivity Abs (Phi=90)</span>
<span class="t" id="t93" style="top:1106.2px;font-size:29.3px;color:#000;letter-spacing:0.766px;left:1408.8px;">Theta / deg vs. dBi</span>
<span class="t" id="t94" style="top:509.8px;font-size:29.3px;color:#000;letter-spacing:0.150px;left:1194.9px;">Phi= 90</span>
<span class="t" id="t95" style="top:509.8px;font-size:29.3px;color:#000;letter-spacing:-0.115px;left:1778.8px;">Phi=270</span>
<span class="t" id="t96" style="top:462.0px;font-size:29.3px;color:#000;letter-spacing:1.840px;left:1536.2px;transform:translateX(-50%);">0</span>
<span class="t" id="t97" style="top:497.6px;font-size:29.3px;color:#000;letter-spacing:0.322px;left:1384.0px;transform:translateX(-50%);">30</span>
<span class="t" id="t98" style="top:497.6px;font-size:29.3px;color:#000;letter-spacing:0.322px;left:1687.4px;transform:translateX(-50%);">30</span>
<span class="t" id="t99" style="top:597.8px;font-size:29.3px;color:#000;letter-spacing:0.522px;left:1284.0px;transform:translateX(-50%);">60</span>
<span class="t" id="t100" style="top:597.8px;font-size:29.3px;color:#000;letter-spacing:0.522px;left:1787.7px;transform:translateX(-50%);">60</span>
<span class="t" id="t101" style="top:752.5px;font-size:29.3px;color:#000;letter-spacing:0.522px;left:1248.3px;transform:translateX(-50%);">90</span>
<span class="t" id="t102" style="top:752.5px;font-size:29.3px;color:#000;letter-spacing:0.522px;left:1824.1px;transform:translateX(-50%);">90</span>
<span class="t" id="t103" style="top:906.2px;font-size:29.3px;color:#000;letter-spacing:-0.251px;left:1276.6px;transform:translateX(-50%);">120</span>
<span class="t" id="t104" style="top:906.2px;font-size:29.3px;color:#000;letter-spacing:-0.251px;left:1796.6px;transform:translateX(-50%);">120</span>
<span class="t" id="t105" style="top:1006.3px;font-size:29.3px;color:#000;letter-spacing:-0.251px;left:1376.6px;transform:translateX(-50%);">150</span>
<span class="t" id="t106" style="top:1006.3px;font-size:29.3px;color:#000;letter-spacing:-0.251px;left:1696.6px;transform:translateX(-50%);">150</span>
<span class="t" id="t107" style="top:1042.0px;font-size:29.3px;color:#000;letter-spacing:-0.251px;left:1537.0px;transform:translateX(-50%);">180</span>
<span class="t" id="t108" style="top:785.8px;font-size:29.3px;color:#000;letter-spacing:-0.569px;left:1534.8px;transform:translateX(-50%);">-10</span>
<span class="t" id="t109" style="top:785.8px;font-size:29.3px;color:#000;letter-spacing:-1.313px;left:1602.0px;transform:translateX(-50%);">-5</span>
<span class="t" id="t110" style="top:785.8px;font-size:29.3px;color:#000;letter-spacing:1.340px;left:1668.3px;transform:translateX(-50%);">0</span>
<span class="t" id="t111" style="top:785.8px;font-size:29.3px;color:#000;letter-spacing:0.640px;left:1734.5px;transform:translateX(-50%);">5</span>
<div class="a " style="left:2120.4px;top:480.0px;width:71.5px;height:3.8px;background:#ff0000;"></div>
<span class="t" id="t112" style="top:467.9px;font-size:29.3px;color:#ff0000;letter-spacing:1.031px;left:2205.6px;">farfield (f=1.05) [1]</span>
<span class="t" id="t113" style="top:926.2px;font-size:29.3px;color:#000;letter-spacing:0.289px;left:2087.2px;">Frequency = 1.05 GHz</span>
<span class="t" id="t114" style="top:970.0px;font-size:29.3px;color:#000;letter-spacing:0.129px;left:2087.2px;">Main lobe magnitude =</span>
<span class="t" id="t115" style="top:1015.7px;font-size:29.3px;color:#000;letter-spacing:0.411px;left:2087.2px;">Main lobe direction =  180.0 deg.</span>
<span class="t" id="t116" style="top:1061.0px;font-size:29.3px;color:#000;letter-spacing:0.325px;left:2087.2px;">Angular width (3 dB) =</span>
<span class="t" id="t117" style="top:1106.2px;font-size:29.3px;color:#000;letter-spacing:-0.287px;left:2087.2px;">Side lobe level =</span>
<span class="t" id="t118" style="top:970.0px;font-size:29.3px;color:#000;letter-spacing:0.240px;left:2543.2px;transform:translateX(-100%);">8.61 dBi</span>
<span class="t" id="t119" style="top:1061.0px;font-size:29.3px;color:#000;letter-spacing:0.350px;left:2537.5px;transform:translateX(-100%);">50.6 deg.</span>
<span class="t" id="t120" style="top:1106.2px;font-size:29.3px;color:#000;letter-spacing:0.310px;left:2422.9px;transform:translateX(-100%);">-0.6 dB</span>
<div class="a " style="left:512.0px;top:1163.2px;width:2048.0px;height:33.0px;background:#fff;"></div>
<div class="a " style="left:512.2px;top:1167.0px;width:1.6px;height:22.0px;background:#8a8a8a;"></div>
<div class="a " style="left:712.6px;top:1167.0px;width:1.6px;height:22.0px;background:#8a8a8a;"></div>
<span class="t" id="t121" style="top:1165.1px;font-size:22.5px;color:#444;letter-spacing:0.330px;left:597.9px;">3D</span>
<span class="t" id="t122" style="top:1165.1px;font-size:22.5px;color:#444;letter-spacing:-0.614px;left:763.0px;">Schematic</span>
<div class="a " style="left:912.0px;top:1162.5px;width:372.0px;height:33.5px;background:#fff;border:1.6px solid #cfcfcf;border-bottom:none;box-sizing:border-box;"></div>
<div class="a " style="left:912.0px;top:1192.4px;width:372.0px;height:3.6px;background:#00578a;"></div>
<span class="t" id="t123" style="top:1166.1px;font-size:22.5px;color:#444;letter-spacing:0.225px;left:936.9px;">Farfields\farfield (f=1.05) [1]</span>
<svg class="a" style="left:1228.3px;top:1165.0px" width="26.5" height="26.5" viewBox="0 0 27 27"><rect x="1" y="1" width="25" height="25" rx="4" fill="#e4553a" stroke="#c9432c" stroke-width="2"/><path d="M8 8l11 11M19 8L8 19" stroke="#fff" stroke-width="3.6"/></svg>
<div class="a " style="left:500.0px;top:1196.0px;width:2060.0px;height:12.0px;background:#f0f0f0;"></div>
<div class="a " style="left:500.0px;top:1208.0px;width:2060.0px;height:312.0px;background:#f0f0f0;"></div>
<div class="a " style="left:512.0px;top:1208.0px;width:1018.0px;height:33.0px;background:#fff;"></div>
<span class="t" id="t124" style="top:1213.6px;font-size:21.5px;color:#111;letter-spacing:0.116px;left:519.3px;">Parameter List</span>
<svg class="a" style="left:1505.0px;top:1216.5px" width="17" height="16" viewBox="0 0 17 16"><path d="M2 2l13 12M15 2L2 14" stroke="#222" stroke-width="3.2" fill="none"/></svg>
<div class="a " style="left:512.9px;top:1241.0px;width:1016.5px;height:183.5px;background:#fff;border:2px solid #7f8a96;box-sizing:border-box;"></div>
<div class="a " style="left:514.9px;top:1243.0px;width:978.0px;height:46.5px;background:#f0f0f0;"></div>
<svg class="a" style="left:523.0px;top:1249.0px" width="28" height="32" viewBox="0 0 28 32"><path d="M2 2h24l-9.5 11v14l-5 3v-17z" fill="#ededed" stroke="#8a8a8a" stroke-width="2"/></svg>
<span class="t" id="t125" style="top:1255.3px;font-size:24px;color:#555;letter-spacing:-0.093px;left:563.0px;">Name</span>
<span class="t" id="t126" style="top:1255.3px;font-size:24px;color:#555;letter-spacing:-0.717px;left:797.0px;">Expression</span>
<span class="t" id="t127" style="top:1255.3px;font-size:24px;color:#555;letter-spacing:-0.350px;left:1028.8px;">Value</span>
<span class="t" id="t128" style="top:1255.3px;font-size:24px;color:#555;letter-spacing:0.010px;left:1263.0px;">Description</span>
<div class="a " style="left:560.5px;top:1243.0px;width:1.5px;height:46.5px;background:#dadada;"></div>
<div class="a " style="left:794.8px;top:1243.0px;width:1.5px;height:46.5px;background:#dadada;"></div>
<div class="a " style="left:1027.0px;top:1243.0px;width:1.5px;height:46.5px;background:#dadada;"></div>
<div class="a " style="left:1260.5px;top:1243.0px;width:1.5px;height:46.5px;background:#dadada;"></div>
<div class="a " style="left:514.9px;top:1290.0px;width:46.0px;height:35.8px;background:#e3e3e3;"></div>
<div class="a " style="left:562.0px;top:1290.0px;width:931.0px;height:35.8px;background:#fff;"></div>
<div class="a " style="left:514.9px;top:1324.6px;width:978.0px;height:1.4px;background:#e4e4e4;"></div>
<svg class="a" style="left:527.0px;top:1300.5px" width="24" height="13" viewBox="0 0 24 13"><path d="M0 6.5h8" stroke="#8a8a8a" stroke-width="1.6"/><path d="M9 1h4v1.8h7V1h3v11h-3v-1.8h-7V12H9z" fill="#9a9a9a"/><rect x="13" y="4.3" width="7" height="4.4" fill="#e8e8e8"/></svg>
<span class="t" id="t129" style="top:1295.3px;font-size:24px;color:#555;letter-spacing:1.043px;left:568.7px;">dip</span>
<span class="t" id="t130" style="top:1295.8px;font-size:24px;color:#8a8a8a;letter-spacing:1.644px;left:781.0px;">=</span>
<span class="t" id="t131" style="top:1295.3px;font-size:24px;color:#555;letter-spacing:-0.708px;left:803.4px;">132.77</span>
<span class="t" id="t132" style="top:1295.3px;font-size:24px;color:#555;letter-spacing:-0.708px;left:1035.2px;">132.77</span>
<div class="a " style="left:514.9px;top:1325.8px;width:46.0px;height:35.8px;background:#e3e3e3;"></div>
<div class="a " style="left:562.0px;top:1325.8px;width:931.0px;height:35.8px;background:#fff;"></div>
<div class="a " style="left:514.9px;top:1360.4px;width:978.0px;height:1.4px;background:#e4e4e4;"></div>
<svg class="a" style="left:527.0px;top:1336.3px" width="24" height="13" viewBox="0 0 24 13"><path d="M0 6.5h8" stroke="#8a8a8a" stroke-width="1.6"/><path d="M9 1h4v1.8h7V1h3v11h-3v-1.8h-7V12H9z" fill="#9a9a9a"/><rect x="13" y="4.3" width="7" height="4.4" fill="#e8e8e8"/></svg>
<span class="t" id="t133" style="top:1331.1px;font-size:24px;color:#555;letter-spacing:0.538px;left:568.7px;">gap</span>
<span class="t" id="t134" style="top:1331.6px;font-size:24px;color:#8a8a8a;letter-spacing:1.644px;left:781.0px;">=</span>
<span class="t" id="t135" style="top:1331.1px;font-size:24px;color:#555;letter-spacing:0.728px;left:803.4px;">10</span>
<span class="t" id="t136" style="top:1331.1px;font-size:24px;color:#555;letter-spacing:0.728px;left:1035.2px;">10</span>
<div class="a " style="left:514.9px;top:1361.6px;width:46.0px;height:35.8px;background:#e3e3e3;"></div>
<div class="a " style="left:562.0px;top:1361.6px;width:931.0px;height:35.8px;background:#bebebe;"></div>
<div class="a " style="left:776.0px;top:1361.6px;width:19.0px;height:35.8px;background:#fff;"></div>
<div class="a " style="left:514.9px;top:1396.2px;width:978.0px;height:1.4px;background:#e4e4e4;"></div>
<svg class="a" style="left:527.0px;top:1372.1px" width="24" height="13" viewBox="0 0 24 13"><path d="M0 6.5h8" stroke="#8a8a8a" stroke-width="1.6"/><path d="M9 1h4v1.8h7V1h3v11h-3v-1.8h-7V12H9z" fill="#9a9a9a"/><rect x="13" y="4.3" width="7" height="4.4" fill="#e8e8e8"/></svg>
<span class="t" id="t137" style="top:1366.9px;font-size:24px;color:#555;letter-spacing:0.454px;left:568.7px;">refl</span>
<span class="t" id="t138" style="top:1367.4px;font-size:24px;color:#8a8a8a;letter-spacing:1.644px;left:781.0px;">=</span>
<span class="t" id="t139" style="top:1366.9px;font-size:24px;color:#555;letter-spacing:-0.708px;left:803.4px;">137.77</span>
<span class="t" id="t140" style="top:1366.9px;font-size:24px;color:#555;letter-spacing:-0.708px;left:1035.2px;">137.77</span>
<div class="a " style="left:514.9px;top:1397.4px;width:46.0px;height:25.1px;background:#e3e3e3;"></div>
<div class="a " style="left:562.0px;top:1397.4px;width:931.0px;height:25.1px;background:#fff;"></div>
<div class="a " style="left:514.9px;top:1421.3px;width:978.0px;height:1.4px;background:#e4e4e4;"></div>
<svg class="a" style="left:527.0px;top:1407.9px" width="24" height="13" viewBox="0 0 24 13"><path d="M0 6.5h8" stroke="#8a8a8a" stroke-width="1.6"/><path d="M9 1h4v1.8h7V1h3v11h-3v-1.8h-7V12H9z" fill="#9a9a9a"/><rect x="13" y="4.3" width="7" height="4.4" fill="#e8e8e8"/></svg>
<span class="t" id="t141" style="top:1402.7px;font-size:24px;color:#555;letter-spacing:0.032px;left:568.7px;">dira</span>
<span class="t" id="t142" style="top:1403.2px;font-size:24px;color:#8a8a8a;letter-spacing:1.644px;left:781.0px;">=</span>
<span class="t" id="t143" style="top:1402.7px;font-size:24px;color:#555;letter-spacing:-0.708px;left:803.4px;">127.18</span>
<span class="t" id="t144" style="top:1402.7px;font-size:24px;color:#555;letter-spacing:-0.708px;left:1035.2px;">127.18</span>
<div class="a " style="left:514.9px;top:1422.5px;width:1012.5px;height:2.0px;background:#7f8a96;"></div>
<div class="a " style="left:500.0px;top:1424.5px;width:1060.0px;height:44.0px;background:#f0f0f0;"></div>
<div class="a " style="left:1494.8px;top:1243.0px;width:32.6px;height:179.5px;background:#e8e8e8;"></div>
<div class="a " style="left:1495.8px;top:1244.3px;width:30.6px;height:32.2px;background:#f4f4f4;border:1.4px solid #c2c2c2;box-sizing:border-box;"></div>
<div class="a " style="left:1495.8px;top:1278.0px;width:30.6px;height:54.0px;background:#f4f4f4;border:1.4px solid #c2c2c2;box-sizing:border-box;"></div>
<div class="a " style="left:1495.8px;top:1392.4px;width:30.6px;height:29.6px;background:#f4f4f4;border:1.4px solid #c2c2c2;box-sizing:border-box;"></div>
<svg class="a" style="left:1504.0px;top:1255.0px" width="14" height="9" viewBox="0 0 14 9"><path d="M0.5 8h13L7 1z" fill="#8a8a8a"/></svg>
<svg class="a" style="left:1504.0px;top:1404.0px" width="14" height="9" viewBox="0 0 14 9"><path d="M0.5 1h13L7 8z" fill="#666"/></svg>
<div class="a " style="left:512.9px;top:1424.5px;width:187.0px;height:44.0px;background:#fff;border:1.6px solid #cfcfcf;border-top:none;box-sizing:border-box;"></div>
<div class="a " style="left:512.9px;top:1464.0px;width:187.0px;height:4.5px;background:#00578a;"></div>
<span class="t" id="t145" style="top:1435.8px;font-size:24px;color:#444;letter-spacing:-1.029px;left:536.5px;">Parameter List</span>
<span class="t" id="t146" style="top:1435.1px;font-size:22.5px;color:#333;font-weight:bold;letter-spacing:-1.048px;left:724.0px;">Result Navigator</span>
<div class="a " style="left:905.7px;top:1435.0px;width:1.6px;height:25.0px;background:#9a9a9a;"></div>
<div class="a " style="left:1542.3px;top:1208.0px;width:1017.7px;height:33.0px;background:#fff;"></div>
<span class="t" id="t147" style="top:1213.6px;font-size:21.5px;color:#111;letter-spacing:-0.189px;left:1549.0px;">Progress</span>
<svg class="a" style="left:2535.5px;top:1216.5px" width="17" height="16" viewBox="0 0 17 16"><path d="M2 2l13 12M15 2L2 14" stroke="#222" stroke-width="3.2" fill="none"/></svg>
<div class="a " style="left:1542.3px;top:1241.0px;width:1020.0px;height:183.5px;background:#fff;border:2px solid #a4a4a4;box-sizing:border-box;"></div>
<svg class="a" style="left:1587.8px;top:1248.0px" width="32" height="32" viewBox="0 0 32 32"><rect width="32" height="32" fill="#00928a"/><path d="M5 13c4-5 7-5 10-2s6 3 9-1l4-1" fill="none" stroke="#e8fbf6" stroke-width="2.2"/><path d="M6 19c4-5 7-5 10-2s6 3 10-1l3 2" fill="none" stroke="#bfeee4" stroke-width="2"/><path d="M9 24c3-3 6-3 9-1s5 2 9-1" fill="none" stroke="#8fdccf" stroke-width="1.6"/></svg>
<span class="t" id="t148" style="top:1253.8px;font-size:24px;color:#555;letter-spacing:-0.186px;left:1624.3px;">dipole_antenna.cst</span>
<svg class="a" style="left:1587.8px;top:1293.7px" width="32" height="32" viewBox="0 0 32 32"><rect width="32" height="32" fill="#00928a"/><path d="M5 13c4-5 7-5 10-2s6 3 9-1l4-1" fill="none" stroke="#e8fbf6" stroke-width="2.2"/><path d="M6 19c4-5 7-5 10-2s6 3 10-1l3 2" fill="none" stroke="#bfeee4" stroke-width="2"/><path d="M9 24c3-3 6-3 9-1s5 2 9-1" fill="none" stroke="#8fdccf" stroke-width="1.6"/></svg>
<span class="t" id="t149" style="top:1299.6px;font-size:24px;color:#555;letter-spacing:0.054px;left:1624.3px;">dipole-antenna-sample.cst</span>
<svg class="a" style="left:1587.8px;top:1340.0px" width="32" height="32" viewBox="0 0 32 32"><rect width="32" height="32" fill="#00928a"/><path d="M5 13c4-5 7-5 10-2s6 3 9-1l4-1" fill="none" stroke="#e8fbf6" stroke-width="2.2"/><path d="M6 19c4-5 7-5 10-2s6 3 10-1l3 2" fill="none" stroke="#bfeee4" stroke-width="2"/><path d="M9 24c3-3 6-3 9-1s5 2 9-1" fill="none" stroke="#8fdccf" stroke-width="1.6"/></svg>
<span class="t" id="t150" style="top:1345.8px;font-size:24px;color:#333;font-weight:bold;letter-spacing:-0.341px;left:1624.3px;">yagi.cst</span>
<div class="a " style="left:1541.5px;top:1432.0px;width:1.6px;height:27.0px;background:#9a9a9a;"></div>
<span class="t" id="t151" style="top:1435.1px;font-size:22.5px;color:#333;font-weight:bold;letter-spacing:-1.569px;left:1566.4px;">Messages</span>
<div class="a " style="left:1684.4px;top:1424.5px;width:131.0px;height:44.0px;background:#fff;border:1.6px solid #cfcfcf;border-top:none;box-sizing:border-box;"></div>
<div class="a " style="left:1684.4px;top:1464.0px;width:131.0px;height:4.5px;background:#00578a;"></div>
<span class="t" id="t152" style="top:1435.8px;font-size:24px;color:#444;letter-spacing:-1.436px;left:1708.8px;">Progress</span>
<div class="a " style="left:0.0px;top:1468.5px;width:2560.0px;height:51.5px;background:#f0f0f0;"></div>
<span class="t" id="t153" style="top:1485.1px;font-size:22.5px;color:#222;letter-spacing:-1.324px;left:13.4px;">Ready</span>
<div class="a " style="left:1560.4px;top:1474.4px;width:43.3px;height:40.3px;background:#fff;border:2px solid #d6d6d6;box-sizing:border-box;"></div>
<svg class="a" style="left:1571.0px;top:1481.0px" width="24" height="28" viewBox="0 0 24 28"><path d="M3 2v20l5-4.5 4 9 4-2-4-8.5h7z" fill="#fff" stroke="#8a8a8a" stroke-width="2"/></svg>
<div class="a " style="left:1612.4px;top:1474.4px;width:43.0px;height:40.3px;background:#eeeeee;border:2px solid #c2c2c2;box-sizing:border-box;"></div>
<svg class="a" style="left:1617.0px;top:1478.0px" width="34" height="34" viewBox="0 0 34 34"><rect x="12" y="3" width="19" height="17" fill="none" stroke="#555" stroke-width="1.6" stroke-dasharray="3 2"/><circle cx="19" cy="13" r="8.5" fill="#dbeaf3" stroke="#777" stroke-width="2.4"/><path d="M13 20L3 31" stroke="#3b7fb0" stroke-width="5" stroke-linecap="round"/></svg>
<svg class="a" style="left:1669.5px;top:1479.0px" width="32" height="32" viewBox="0 0 32 32"><path d="M16 1l6.500 7.500h-4.300v5.300h5.300V9.500L31 16l-7.500 6.500v-4.300h-5.300v5.300h4.300L16 31l-6.500-7.500h4.300v-5.300H8.500v4.300L1 16l7.500-6.500v4.300h5.300V8.500H9.500z" fill="#4a8ab4" stroke="#2b5f86" stroke-width="1.200"/></svg>
<div class="a " style="left:1720.3px;top:1480.0px;width:1.6px;height:30.0px;background:#cdcdcd;"></div>
<svg class="a" style="left:1741.0px;top:1477.0px" width="36" height="36" viewBox="0 0 36 36"><circle cx="22" cy="13" r="10" fill="#e9eef2" stroke="#777" stroke-width="2.6"/><circle cx="22" cy="13" r="5" fill="none" stroke="#555" stroke-width="1.6" stroke-dasharray="4 3"/><path d="M14 21L4 32" stroke="#3b7fb0" stroke-width="5" stroke-linecap="round"/></svg>
<div class="a " style="left:1791.5px;top:1480.0px;width:1.6px;height:30.0px;background:#cdcdcd;"></div>
<svg class="a" style="left:1815.0px;top:1480.0px" width="33" height="32" viewBox="0 0 33 32"><path d="M2 2h17l5 5v17H2z" fill="#fafafa" stroke="#8a8a8a" stroke-width="2"/><path d="M6 9h10M6 14h13M6 19h8" stroke="#9a9a9a" stroke-width="1.8"/><path d="M24 17v13M17.5 23.5h13" stroke="#8d8d8d" stroke-width="5"/></svg>
<span class="t" id="t154" style="top:1484.4px;font-size:24px;color:#b4b4b4;letter-spacing:-1.335px;left:1871.0px;">Raster=10.000</span>
<div class="a " style="left:2024.4px;top:1478.0px;width:1.6px;height:34.0px;background:#d0d0d0;"></div>
<div class="a " style="left:2260.4px;top:1478.0px;width:1.6px;height:34.0px;background:#d0d0d0;"></div>
<div class="a " style="left:2364.0px;top:1478.0px;width:1.6px;height:34.0px;background:#d0d0d0;"></div>
<div class="a " style="left:2553.0px;top:1478.0px;width:1.6px;height:34.0px;background:#d0d0d0;"></div>
<span class="t" id="t155" style="top:1484.4px;font-size:24px;color:#333;letter-spacing:-1.192px;left:2041.0px;">Tetrahedrons=18,291</span>
<span class="t" id="t156" style="top:1484.4px;font-size:24px;color:#333;letter-spacing:-0.647px;left:2277.3px;">Normal</span>
<span class="t" id="t157" style="top:1484.4px;font-size:24px;color:#333;letter-spacing:-0.562px;left:2380.6px;">mm</span>
<span class="t" id="t158" style="top:1484.4px;font-size:24px;color:#333;letter-spacing:-1.747px;left:2430.4px;">GHz</span>
<span class="t" id="t159" style="top:1484.4px;font-size:24px;color:#333;letter-spacing:-1.300px;left:2483.4px;">ns</span>
<span class="t" id="t160" style="top:1484.4px;font-size:24px;color:#333;letter-spacing:-2.089px;left:2518.4px;">°C</span>
<div class="a " style="left:0.0px;top:1520.0px;width:2560.0px;height:78.0px;background:linear-gradient(90deg,#dddcdc 0%,#e2e0e0 25%,#e6e1e0 50%,#ebe5e2 72%,#ece8e6 100%);"></div>
<svg class="a" style="left:31.5px;top:1544.5px" width="33" height="33" viewBox="0 0 33 33"><path d="M0 4.6l13.3-1.8v12.8H0zM15 2.5L33 0v15.6H15zM0 17.4h13.3v12.8L0 28.4zM15 17.4h18V33l-18-2.5z" fill="#000"/></svg>
<div class="a " style="left:97.7px;top:1520.5px;width:573.0px;height:78.0px;background:#fff;border:1.6px solid #bdbdbd;box-sizing:border-box;border-bottom:none;"></div>
<svg class="a" style="left:118.0px;top:1545.0px" width="38" height="36" viewBox="0 0 38 36"><circle cx="23" cy="13" r="10.5" fill="none" stroke="#111" stroke-width="2.6"/><path d="M15.5 21L2 34" stroke="#111" stroke-width="2.8"/></svg>
<span class="t" id="t161" style="top:1547.1px;font-size:30px;color:#2b2b2b;letter-spacing:-0.287px;left:177.0px;">Type here to search</span>
<svg class="a" style="left:526.0px;top:1530.0px" width="128" height="60" viewBox="0 0 128 60"><defs><linearGradient id="sg" x1="0" y1="0" x2="1" y2="1"><stop offset="0" stop-color="#ffd84a"/><stop offset="1" stop-color="#f5a90c"/></linearGradient></defs><path d="M50 8Q53 23 69 27Q53 31 50 46Q47 31 31 27Q47 23 50 8z" fill="url(#sg)" stroke="url(#sg)" stroke-width="5" stroke-linejoin="round"/><path d="M96 29c2 8 4 10 12 12-8 2-10 4-12 12-2-8-4-10-12-12 8-2 10-4 12-12z" fill="url(#sg)" stroke="url(#sg)" stroke-width="2.5" stroke-linejoin="round"/><path d="M11 40c1 5 3 6 8 7-5 1-7 3-8 8-1-5-3-7-8-8 5-1 7-2 8-7z" fill="#2b9bea" stroke="#2b9bea" stroke-width="1.5" stroke-linejoin="round"/><circle cx="83" cy="9" r="4" fill="#f4622a"/><circle cx="121" cy="48" r="4" fill="#8ec63f"/></svg>
<svg class="a" style="left:703.0px;top:1544.0px" width="34" height="32" viewBox="0 0 34 32"><path d="M1.500 6V1.500h21V6M1.500 26v4.500h21V26M2.500 9.500h19v13h-19z" fill="none" stroke="#111" stroke-width="2.400"/><circle cx="30" cy="11.500" r="3" fill="#111"/><path d="M30 0v5M30 18v13" stroke="#111" stroke-width="2.400"/></svg>
<svg class="a" style="left:797.0px;top:1536.0px" width="50" height="48" viewBox="0 0 50 48"><defs><linearGradient id="cp1" x1="0" y1="0" x2="0" y2="1"><stop offset="0" stop-color="#1a9bf0"/><stop offset=".35" stop-color="#22a0c8"/><stop offset=".6" stop-color="#8cc63a"/><stop offset="1" stop-color="#f0d020"/></linearGradient><linearGradient id="cp2" x1="0" y1="0" x2="0" y2="1"><stop offset="0" stop-color="#a85af0"/><stop offset=".4" stop-color="#e060c0"/><stop offset=".75" stop-color="#f87a70"/><stop offset="1" stop-color="#f8a040"/></linearGradient></defs><path d="M12 2h17c4 0 6 3 7 6l2 6h-9c-4 0-6 2-7 6l-3 11c-1 3-3 4-6 4H8c-5 0-8-4-7-8l4-17c1-5 3-8 7-8z" fill="url(#cp1)"/><path d="M29 2c4 0 6 2 7 6l2 6H28z" fill="#2a50d8"/><path d="M38 14h4c5 0 8 4 7 8l-4 17c-1 5-4 7-8 7H20c-4 0-6-3-7-6l-2-5h8c4 0 6-2 7-6l3-11c1-3 3-4 9-4z" fill="url(#cp2)"/><path d="M13 40l-2-5h8z" fill="#e8502a"/></svg>
<svg class="a" style="left:894.0px;top:1536.0px" width="50" height="50" viewBox="0 0 50 50"><defs><linearGradient id="eg" x1="0" y1="0" x2="1" y2="0"><stop offset="0" stop-color="#1b7fd6"/><stop offset=".55" stop-color="#2bb7c9"/><stop offset="1" stop-color="#6bd66a"/></linearGradient></defs><path d="M25 1c13 0 24 9 24 20 0 8-6 13-13 13-5 0-8-2-8-5 0-2 2-3 2-6 0-4-4-8-10-8-8 0-15 6-17 14C0 13 11 1 25 1z" fill="url(#eg)"/><path d="M3 28c2-8 9-13 17-13 6 0 10 4 10 8-4-3-11-1-12 6-1 8 6 16 16 16-3 3-7 4-11 4C10 49 1 40 3 28z" fill="#1667b7"/><path d="M18 29c1-6 8-8 12-6 0 3-2 4-2 6 0 3 3 5 8 5 5 0 9-2 11-6-1 9-9 17-19 17-8 0-11-9-10-16z" fill="#1e8bd8"/></svg>
<svg class="a" style="left:996.5px;top:1542.5px" width="44" height="35" viewBox="0 0 44 35"><path d="M.5 2c0-1 1-2 2-2h14l3.500 4.500H.5z" fill="#e0a41a"/><path d="M.5 4.500h41c1 0 2 1 2 2v25.500c0 1-1 2-2 2h-39c-1 0-2-1-2-2z" fill="#fdd663"/><path d="M.5 18h43v14c0 1-1 2-2 2h-39c-1 0-2-1-2-2z" fill="#f9cc4d"/><path d="M7.500 18h28v16h-6.500v-9.500H14V34H7.500z" fill="#3d94e4"/><path d="M7.500 18h28v3h-28z" fill="#55a7ee"/></svg>
<svg class="a" style="left:1092.0px;top:1534.5px" width="48" height="50" viewBox="0 0 48 50"><path d="M12 10V6.500c0-3 2-4.500 5-4.500h14c3 0 5 1.500 5 4.500V10" fill="none" stroke="#35b4f2" stroke-width="3.600"/><defs><linearGradient id="stg" x1="0" y1="0" x2="1" y2="1"><stop offset="0" stop-color="#1a5ea0"/><stop offset="1" stop-color="#123a6a"/></linearGradient></defs><path d="M.5 8.500h47V42c0 4-3 7-7 7h-33c-4 0-7-3-7-7z" fill="url(#stg)"/><rect x="14" y="18.500" width="9.500" height="9.500" fill="#f25022"/><rect x="25" y="18.500" width="9.500" height="9.500" fill="#7fba00"/><rect x="14" y="29.500" width="9.500" height="9.500" fill="#00a4ef"/><rect x="25" y="29.500" width="9.500" height="9.500" fill="#ffb900"/></svg>
<svg class="a" style="left:1188.0px;top:1540.0px" width="52" height="42" viewBox="0 0 52 42"><path d="M12 12L36 0l14 8v26c0 3-3 6-6 6H16c-3 0-4-2-4-5z" fill="#1f8fe0"/><path d="M36 0l14 8-20 14-12-8z" fill="#0f5fae"/><path d="M12 26l38-8v16c0 3-3 6-6 6H16c-3 0-4-3-4-5z" fill="#3fc3f0"/><rect x="0" y="10" width="24" height="24" rx="3" fill="#1271c8"/><circle cx="12" cy="22" r="6" fill="none" stroke="#fff" stroke-width="3"/></svg>
<svg class="a" style="left:1285.0px;top:1536.0px" width="52" height="50" viewBox="0 0 52 50"><ellipse cx="22" cy="21" rx="20" ry="15" fill="#f4f4f4" stroke="#e03a3a" stroke-width="2.2" transform="rotate(-18 22 21)"/><path d="M18 10l14 26M34 10L22 34" stroke="#b9bcc2" stroke-width="3"/><ellipse cx="30" cy="42" rx="5" ry="7" fill="none" stroke="#2d7fc9" stroke-width="3.4" transform="rotate(-25 30 42)"/><ellipse cx="42" cy="34" rx="7" ry="5" fill="none" stroke="#2d7fc9" stroke-width="3.4" transform="rotate(-25 42 34)"/></svg>
<svg class="a" style="left:1384.0px;top:1536.0px" width="50" height="50" viewBox="0 0 50 50"><circle cx="25" cy="25" r="24" fill="#db4437"/><path d="M25 25L4.2 13A24 24 0 0 0 14 46.3z" fill="#0f9d58"/><path d="M25 25L14 46.3A24 24 0 0 0 49 25z" fill="#ffcd40"/><path d="M25 25h24A24 24 0 0 0 4.2 13z" fill="#db4437"/><path d="M25 14h21.3" stroke="#db4437" stroke-width="0"/><circle cx="25" cy="25" r="11" fill="#fff"/><circle cx="25" cy="25" r="8.8" fill="#4285f4"/></svg>
<div class="a " style="left:1370.5px;top:1594.5px;width:79.5px;height:3.5px;background:#0b76d1;"></div>
<div class="a " style="left:1459.7px;top:1520.0px;width:97.0px;height:78.0px;background:#f4f2f1;"></div>
<div class="a " style="left:1459.7px;top:1594.5px;width:97.0px;height:3.5px;background:#0b76d1;"></div>
<svg class="a" style="left:1490.0px;top:1538.0px" width="38" height="36" viewBox="0 0 38 36"><rect width="36" height="35" fill="#0a1a80"/><path d="M29 7H9v10h18v11H7M13 12h10M13 23h10" fill="none" stroke="#fff" stroke-width="3.4"/></svg>
<span class="t" id="t162" style="top:1570.1px;font-size:13px;color:#fff;font-weight:bold;left:1519.0px;transform:translateX(-50%);text-shadow:0 0 2px #000,0 0 2px #000,0 0 3px #000;">2024</span>
<svg class="a" style="left:1650.0px;top:1539.0px" width="45" height="42" viewBox="0 0 45 42"><rect x="2" y="1" width="40" height="40" rx="6" fill="#1c5fb0"/><rect x="0" y="1" width="38" height="40" rx="6" fill="#30b4ee"/><rect x="7" y="12" width="6" height="14" rx="2" fill="#fff"/><rect x="17" y="18" width="6" height="8" rx="2" fill="#fff"/><rect x="27" y="15" width="6" height="11" rx="2" fill="#fff"/><rect x="7" y="30" width="26" height="4" rx="2" fill="#bfe8fb"/></svg>
<span class="t" id="t163" style="top:1546.1px;font-size:30px;color:#1a1a1a;letter-spacing:-1.061px;left:1713.0px;">Deadline to claim $1,...</span>
<svg class="a" style="left:2041.0px;top:1551.0px" width="28" height="18" viewBox="0 0 28 18"><path d="M2 16L14 3l12 13" fill="none" stroke="#111" stroke-width="2.6"/></svg>
<svg class="a" style="left:2091.0px;top:1543.0px" width="26" height="34" viewBox="0 0 26 34"><rect x="3" y="8" width="13" height="16" rx="4" fill="none" stroke="#111" stroke-width="2.2"/><path d="M16 14l7-4v12l-7-4" fill="none" stroke="#111" stroke-width="2.2"/><path d="M3 6c4-5 10-5 14 0M3 28c4 5 10 5 14 0" fill="none" stroke="#111" stroke-width="2"/></svg>
<svg class="a" style="left:2133.0px;top:1548.0px" width="36" height="24" viewBox="0 0 36 24"><path d="M9 22h19c4 0 7-3 7-6.500S32 9 28 9c-1-4-5-7-9-7-5 0-8 3-9 7-5 0-8 3-8 6.500S5 22 9 22z" fill="#8d8d8d" stroke="#444" stroke-width="2"/></svg>
<svg class="a" style="left:2184.0px;top:1552.0px" width="34" height="18" viewBox="0 0 34 18"><rect x="1.2" y="1.2" width="28" height="15" rx="2" fill="none" stroke="#111" stroke-width="2.2"/><rect x="30" y="6" width="3" height="6" fill="#111"/><rect x="4.500" y="4.500" width="11" height="8.500" fill="#111"/></svg>
<svg class="a" style="left:2236.0px;top:1546.0px" width="28" height="28" viewBox="0 0 28 28"><path d="M3 26A23 23 0 0 1 26 3M8 26A18 18 0 0 1 26 8M13.500 26A12.500 12.500 0 0 1 26 13.500" fill="none" stroke="#111" stroke-width="2.2" transform="rotate(0)"/><circle cx="22" cy="23" r="3.200" fill="#111"/></svg>
<svg class="a" style="left:2278.0px;top:1545.0px" width="36" height="30" viewBox="0 0 36 30"><path d="M2 10h6l8-7v24l-8-7H2z" fill="none" stroke="#111" stroke-width="2.2"/><path d="M20 10c2 3 2 7 0 10" fill="none" stroke="#111" stroke-width="2"/><path d="M24 6c4 5 4 13 0 18" fill="none" stroke="#888" stroke-width="2"/><path d="M28 2c6 8 6 18 0 26" fill="none" stroke="#bbb" stroke-width="2"/></svg>
<span class="t" id="t164" style="top:1531.0px;font-size:25px;color:#1a1a1a;letter-spacing:-0.980px;left:2385.4px;transform:translateX(-50%);">8:19 PM</span>
<span class="t" id="t165" style="top:1567.8px;font-size:25px;color:#1a1a1a;letter-spacing:-0.041px;left:2385.3px;transform:translateX(-50%);">4/15/2025</span>
<svg class="a" style="left:2477.0px;top:1543.0px" width="48" height="46" viewBox="0 0 48 46"><path d="M1 1h33v26H12l-6 7v-7H1z" fill="#111"/><path d="M7 8h21M7 14h21M7 20h14" stroke="#fff" stroke-width="2"/><circle cx="31" cy="29.500" r="15.500" fill="#d6d4d2" stroke="#6a6a6a" stroke-width="1.400"/></svg>
<span class="t" id="t166" style="top:1559.2px;font-size:26px;color:#111;left:2508.0px;transform:translateX(-50%);">1</span>
<div class="a " style="left:2550.5px;top:1520.0px;width:2.0px;height:78.0px;background:#8a8a8a;"></div>
<div class="a " style="left:27.0px;top:1294.0px;width:686.0px;height:209.0px;background:rgba(255,255,255,0.10);border:1.5px solid rgba(150,150,150,0.10);box-sizing:border-box;"></div>
<span class="t" id="t167" style="top:1311.3px;font-size:24px;color:rgba(110,110,120,0.13);letter-spacing:-0.270px;left:77.0px;">Snipping Tool</span>
<div class="a " style="left:30.0px;top:1350.0px;width:680.0px;height:64.0px;background:rgba(255,255,255,0.07);"></div>
<span class="t" id="t168" style="top:1369.3px;font-size:24px;color:rgba(110,110,120,0.13);letter-spacing:-0.619px;left:81.5px;">New</span>
<div class="a " style="left:143.0px;top:1366.0px;width:42.0px;height:34.0px;background:rgba(90,160,230,0.10);"></div>
<span class="t" id="t169" style="top:1369.3px;font-size:24px;color:rgba(110,110,120,0.13);letter-spacing:0.028px;left:191.0px;">Mode</span>
<span class="t" id="t170" style="top:1369.3px;font-size:24px;color:rgba(110,110,120,0.13);letter-spacing:-0.560px;left:346.6px;">Delay</span>
<svg class="a" style="left:450px;top:1363px" width="38" height="38" viewBox="0 0 38 38"><path d="M3 3l32 32M35 3L3 35" stroke="rgba(120,120,120,0.12)" stroke-width="7"/></svg>
<div class="a" style="left:299px;top:1361px;width:40px;height:40px;border-radius:50%;border:2px solid rgba(150,150,150,0.10);box-sizing:border-box"></div>
<span class="t" id="t171" style="top:1369.3px;font-size:24px;color:rgba(110,110,120,0.09);letter-spacing:-1.093px;left:495.6px;">Cancel</span>
<span class="t" id="t172" style="top:1369.3px;font-size:24px;color:rgba(110,110,120,0.13);letter-spacing:-0.280px;left:624.0px;">Options</span>
<span class="t" id="t173" style="top:1427.3px;font-size:24px;color:rgba(110,110,120,0.12);letter-spacing:-0.191px;left:47.0px;">Select the snip mode using the Mode button or click the</span>
<span class="t" id="t174" style="top:1458.8px;font-size:24px;color:rgba(110,110,120,0.12);letter-spacing:-0.356px;left:47.0px;">New button.</span>
</body></html>
